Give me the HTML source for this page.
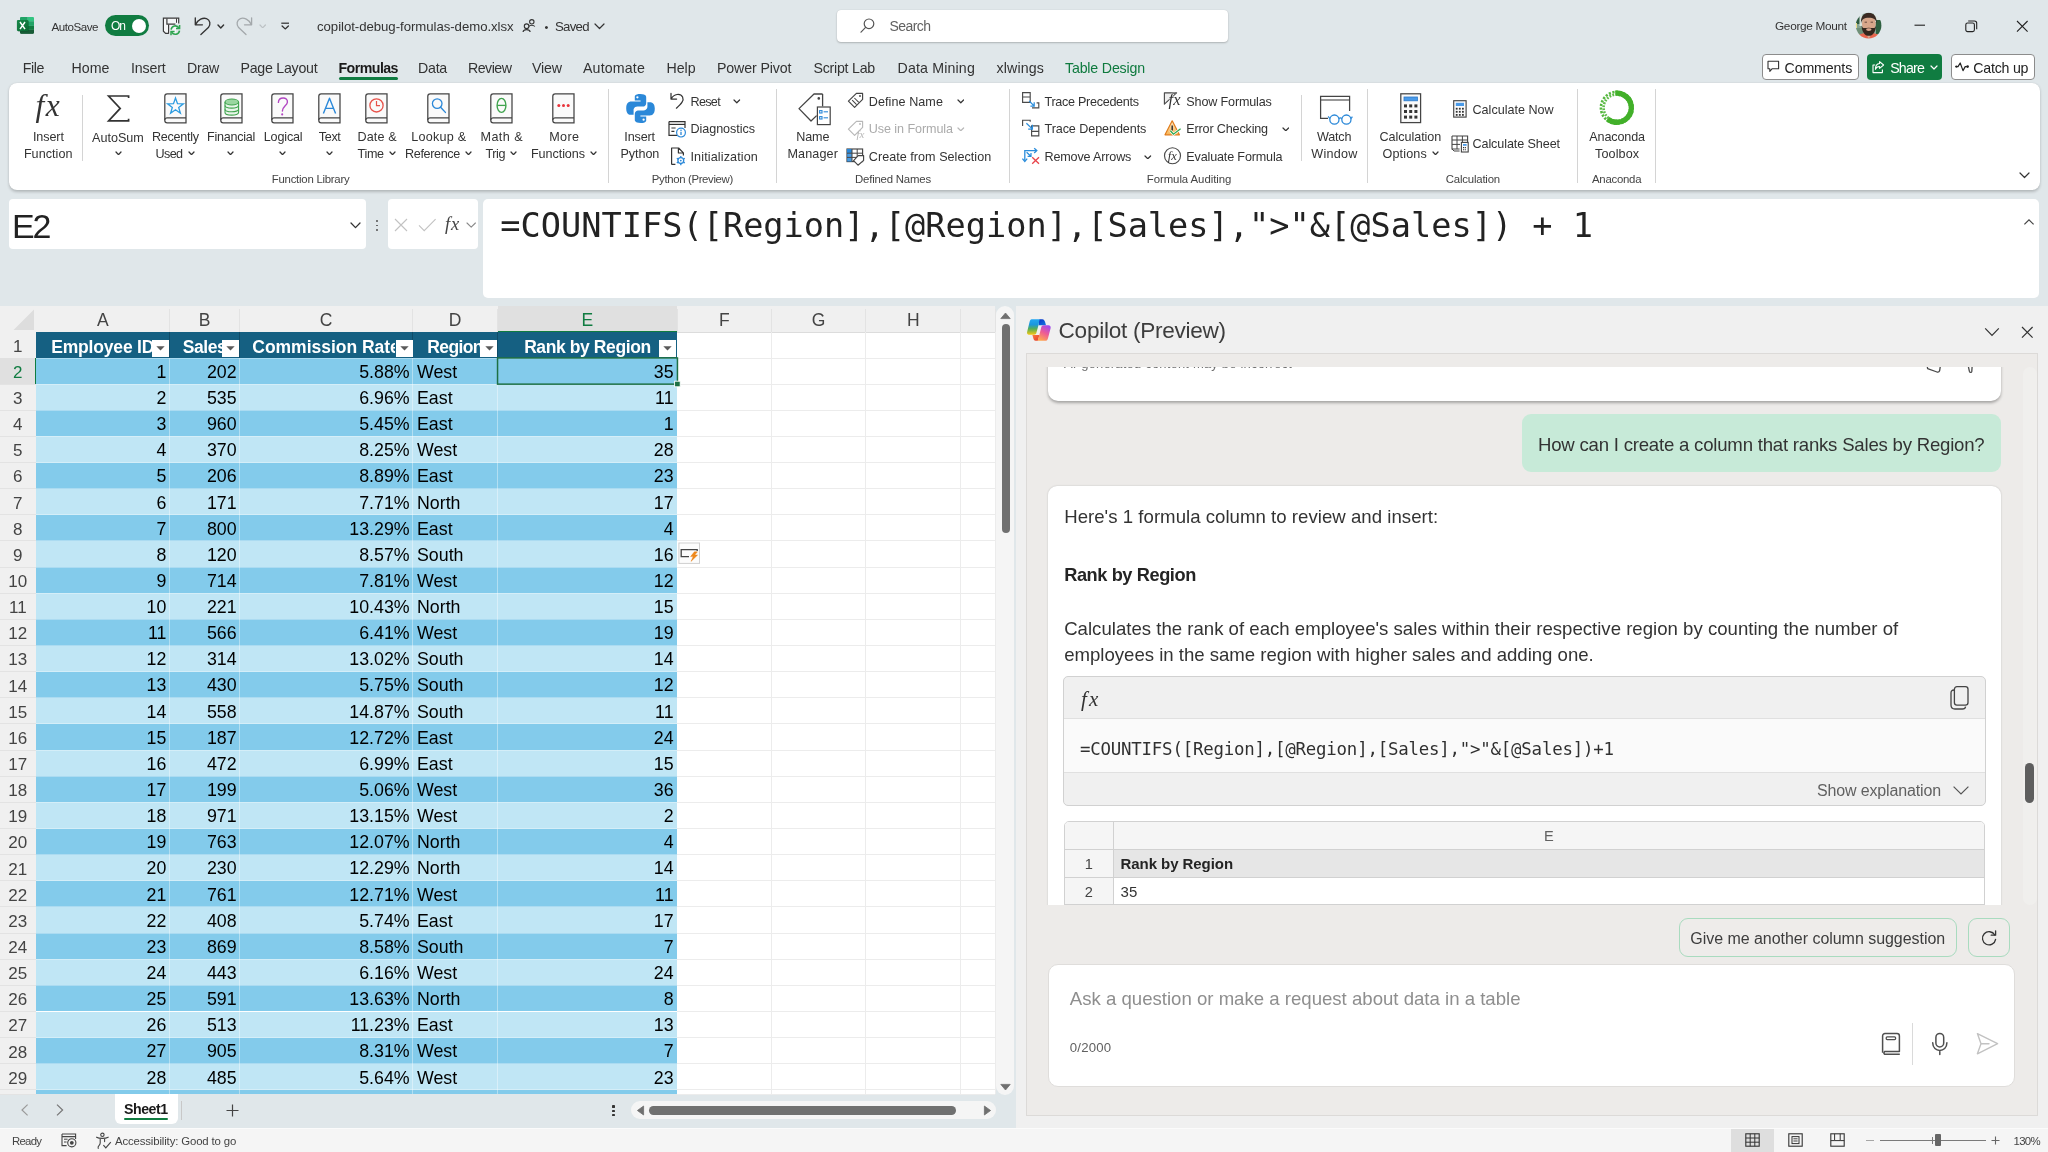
<!DOCTYPE html>
<html lang="en"><head><meta charset="utf-8"><title>copilot-debug-formulas-demo.xlsx - Excel</title>
<style>
html,body{margin:0;padding:0;}
body{width:2048px;height:1152px;overflow:hidden;background:#E0E7EA;font-family:"Liberation Sans",sans-serif;position:relative;}
#app{position:absolute;left:0;top:0;width:2048px;height:1152px;overflow:hidden;will-change:transform;}
.b{position:absolute;display:block;}
.t{position:absolute;display:block;white-space:pre;line-height:1;}
</style></head><body><div id="app">
<svg class="b" style="left:16px;top:16px;" width="19" height="19" viewBox="16 16 19 19"><defs><clipPath id="xc"><rect x="20" y="16.9" width="14" height="17" rx="1.1"/></clipPath>
<linearGradient id="xg" x1="0" y1="0" x2="1" y2="1"><stop offset="0" stop-color="#18884A"/><stop offset="1" stop-color="#0B6A33"/></linearGradient></defs>
<g clip-path="url(#xc)"><rect x="20" y="16.9" width="7.8" height="4.3" fill="#21A366"/><rect x="27.8" y="16.9" width="6.2" height="4.3" fill="#33C481"/>
<rect x="20" y="21.2" width="7.8" height="4.7" fill="#107C41"/><rect x="27.8" y="21.2" width="6.2" height="4.7" fill="#21A366"/>
<rect x="20" y="25.9" width="14" height="4" fill="#107C41"/><rect x="20" y="29.9" width="14" height="4" fill="#185C37"/></g>
<rect x="17.6" y="20.5" width="11.2" height="11.2" rx="1.1" fill="#0A4F28" opacity=".45"/>
<rect x="16.9" y="20" width="11.4" height="11.1" rx="1.1" fill="url(#xg)"/>
<path d="M20 22 L25 29.1 M25 22 L20 29.1" stroke="#fff" stroke-width="1.5" fill="none"/></svg>
<span class="t" style="left:51.50px;top:21.00px;font-size:11.6px;color:#333;letter-spacing:-0.475px;">AutoSave</span>
<div class="b" style="left:104.7px;top:14.8px;width:44.5px;height:21.5px;background:#107C41;border-radius:11px;"></div>
<span class="t" style="left:111.00px;top:20.00px;font-size:12px;color:#fff;letter-spacing:-1.004px;">On</span>
<div class="b" style="left:131.5px;top:18.5px;width:14.6px;height:14.6px;background:#fff;border-radius:50%;"></div>
<svg class="b" style="left:161px;top:16px;" width="22" height="21" viewBox="161 16 22 21"><path d="M163.4 18.1 H178.8 V24 H176 V33.4 H165.6 L163.4 31.2 Z" fill="#F4F6F7" stroke="none"/>
<path d="M178.7 23.6 V18.1 H163.4 V31.2 L165.6 33.4 H168.8" fill="none" stroke="#3B3B3B" stroke-width="1.2"/>
<path d="M166.9 18.4 V24.1 H175.4" fill="none" stroke="#3B3B3B" stroke-width="1.2"/>
<path d="M176.5 18.4 V22.8" fill="none" stroke="#3B3B3B" stroke-width="1"/>
<path d="M168.6 33.4 V24.4" fill="none" stroke="#3B3B3B" stroke-width="1.2"/>
<path d="M171.1 29.6 A4.2 4.2 0 0 1 178.9 28" fill="none" stroke="#2EA44F" stroke-width="1.6"/><path d="M179.6 25 V28.6 H176" fill="none" stroke="#2EA44F" stroke-width="1.5"/>
<path d="M179.5 30.6 A4.2 4.2 0 0 1 171.7 32.2" fill="none" stroke="#2EA44F" stroke-width="1.6"/><path d="M171 35.2 V31.6 H174.6" fill="none" stroke="#2EA44F" stroke-width="1.5"/></svg>
<svg class="b" style="left:193px;top:15px;" width="22" height="22" viewBox="193 15 22 22"><path d="M195.3 17.8 V24.8 H202.4 M195.8 24.3 C198 19.6 203 17.3 206.5 18.6 C210.2 20 211 24.2 208.4 27.6 L200.9 34.5" fill="none" stroke="#333" stroke-width="1.35" stroke-linecap="round" stroke-linejoin="round"/></svg>
<svg class="b" style="left:217.1px;top:23.5px;" width="7.6" height="5" viewBox="0 0 7.6 5"><path d="M1 1 L3.8 4 L6.6 1" fill="none" stroke="#333" stroke-width="1.4" stroke-linecap="round" stroke-linejoin="round"/></svg>
<svg class="b" style="left:234px;top:15px;" width="22" height="22" viewBox="234 15 22 22"><path d="M251.6 17.8 V24.8 H244.5 M251.1 24.3 C249 19.6 244 17.3 240.4 18.6 C236.8 20 236 24.2 238.6 27.6 L246 34.5" fill="none" stroke="#A3A8AB" stroke-width="1.3" stroke-linecap="round" stroke-linejoin="round"/></svg>
<svg class="b" style="left:258.8px;top:23.6px;" width="7.4" height="4.8" viewBox="0 0 7.4 4.8"><path d="M1 1 L3.7 3.8 L6.4 1" fill="none" stroke="#BCC1C4" stroke-width="1.2" stroke-linecap="round" stroke-linejoin="round"/></svg>
<svg class="b" style="left:279px;top:21px;" width="12" height="10" viewBox="279 21 12 10"><path d="M281.3 23.2 H289" stroke="#333" stroke-width="1.25" fill="none"/><path d="M282.1 26 L285.2 28.9 L288.4 26" stroke="#333" stroke-width="1.3" fill="none" stroke-linejoin="round" stroke-linecap="round"/></svg>
<span class="t" style="left:317.00px;top:20.00px;font-size:13.2px;color:#333;letter-spacing:-0.040px;">copilot-debug-formulas-demo.xlsx</span>
<svg class="b" style="left:522px;top:18px;" width="15" height="15" viewBox="0 0 15 15"><circle cx="9.8" cy="3.8" r="2.2" fill="none" stroke="#333" stroke-width="1.1"/>
<path d="M6.8 8.5 C8 6.8 11.6 6.8 12.8 8.5" fill="none" stroke="#333" stroke-width="1.1"/>
<circle cx="4.6" cy="8.2" r="2.3" fill="none" stroke="#333" stroke-width="1.1"/>
<path d="M1 14 C1.6 10.8 7.6 10.8 8.2 14" fill="none" stroke="#333" stroke-width="1.1"/></svg>
<span class="t" style="left:544.50px;top:22.00px;font-size:11px;color:#333;">•</span>
<span class="t" style="left:555.00px;top:20.00px;font-size:13.2px;color:#333;letter-spacing:-0.726px;">Saved</span>
<svg class="b" style="left:593.7px;top:23.25px;" width="11" height="6.5" viewBox="0 0 11 6.5"><path d="M1 1 L5.5 5.5 L10 1" fill="none" stroke="#333" stroke-width="1.2" stroke-linecap="round" stroke-linejoin="round"/></svg>
<div class="b" style="left:837px;top:10px;width:391px;height:32px;background:#fff;border-radius:4px;box-shadow:0 1px 2px rgba(0,0,0,.22),0 0 1px rgba(0,0,0,.18);"></div>
<svg class="b" style="left:859px;top:17px;" width="17" height="17" viewBox="0 0 17 17"><circle cx="10" cy="6.8" r="4.8" fill="none" stroke="#555" stroke-width="1.2"/><path d="M6.6 10.4 L2 15.2" stroke="#555" stroke-width="1.2" stroke-linecap="round"/></svg>
<span class="t" style="left:889.40px;top:19.00px;font-size:14px;color:#616161;letter-spacing:-0.543px;">Search</span>
<span class="t" style="left:1775.00px;top:21.00px;font-size:11.8px;color:#333;letter-spacing:-0.303px;">George Mount</span>
<svg class="b" style="left:1854px;top:11px;" width="30" height="30" viewBox="1854 11 30 30"><defs><clipPath id="av"><circle cx="1868.6" cy="25.6" r="12.8"/></clipPath>
<filter id="avb" x="-10%" y="-10%" width="120%" height="120%"><feGaussianBlur stdDeviation="0.55"/></filter></defs>
<g clip-path="url(#av)"><g filter="url(#avb)"><rect x="1853" y="10" width="32" height="32" fill="#86A392"/>
<rect x="1853" y="10" width="9" height="14" fill="#2E5A40"/><rect x="1859.5" y="12" width="3" height="14" fill="#D6E2DC"/>
<rect x="1874" y="10" width="12" height="12" fill="#DCE6E2"/><rect x="1876" y="20" width="10" height="14" fill="#2F6040"/>
<rect x="1853" y="23" width="4" height="5" fill="#E8DC8C"/><rect x="1853" y="28" width="10" height="8" fill="#6F9078"/>
<path d="M1854 42 C1856 34 1862 32.5 1868.8 33.5 C1875.6 32.5 1881 34 1883 42 Z" fill="#E8664E"/>
<path d="M1865.4 33 L1868.8 38.5 L1872.2 33 Z" fill="#D9A88C"/>
<ellipse cx="1868.8" cy="23.6" rx="6.9" ry="8.8" fill="#D8A68A"/>
<path d="M1861 23.4 C1859.6 9.2 1878 9.2 1876.6 23.4 C1875.8 19 1873.6 17.7 1868.8 17.7 C1864 17.7 1861.8 19 1861 23.4 Z" fill="#3A2B24"/>
<path d="M1861.6 25.4 C1861.8 31.6 1864.6 35.8 1868.8 35.8 C1873 35.8 1875.8 31.6 1876 25.4 C1875 29 1873.4 28 1868.8 27.8 C1864.2 28 1862.6 29 1861.6 25.4 Z" fill="#35261F"/>
<ellipse cx="1868.8" cy="29.6" rx="2.7" ry="1.3" fill="#D9A48C"/>
<path d="M1864.6 22.2 H1867 M1870.6 22.2 H1873" stroke="#5A4034" stroke-width="0.9"/></g></g></svg>
<svg class="b" style="left:1914px;top:24px;" width="12" height="3" viewBox="0 0 12 3"><path d="M0.5 1.2 H11" stroke="#222" stroke-width="1.1"/></svg>
<svg class="b" style="left:1965px;top:19.5px;" width="13" height="13" viewBox="0 0 13 13"><rect x="0.8" y="3" width="8.6" height="8.6" rx="1.8" fill="none" stroke="#222" stroke-width="1.1"/><path d="M3.2 1 H9.4 A2.3 2.3 0 0 1 11.7 3.3 V9.2" fill="none" stroke="#222" stroke-width="1.1"/></svg>
<svg class="b" style="left:2016px;top:19.5px;" width="13" height="13" viewBox="0 0 13 13"><path d="M1 1 L11.6 11.6 M11.6 1 L1 11.6" stroke="#222" stroke-width="1.1"/></svg>
<span class="t" style="left:22.80px;top:61.00px;font-size:14.2px;color:#333;letter-spacing:-0.420px;">File</span>
<span class="t" style="left:71.50px;top:61.00px;font-size:14.2px;color:#333;letter-spacing:0.030px;">Home</span>
<span class="t" style="left:131.00px;top:61.00px;font-size:14.2px;color:#333;letter-spacing:-0.169px;">Insert</span>
<span class="t" style="left:187.00px;top:61.00px;font-size:14.2px;color:#333;letter-spacing:-0.284px;">Draw</span>
<span class="t" style="left:240.50px;top:61.00px;font-size:14.2px;color:#333;letter-spacing:-0.249px;">Page Layout</span>
<span class="t" style="left:418.00px;top:61.00px;font-size:14.2px;color:#333;letter-spacing:-0.249px;">Data</span>
<span class="t" style="left:468.00px;top:61.00px;font-size:14.2px;color:#333;letter-spacing:-0.510px;">Review</span>
<span class="t" style="left:532.00px;top:61.00px;font-size:14.2px;color:#333;letter-spacing:-0.131px;">View</span>
<span class="t" style="left:583.00px;top:61.00px;font-size:14.2px;color:#333;letter-spacing:0.152px;">Automate</span>
<span class="t" style="left:666.50px;top:61.00px;font-size:14.2px;color:#333;letter-spacing:-0.051px;">Help</span>
<span class="t" style="left:717.00px;top:61.00px;font-size:14.2px;color:#333;letter-spacing:-0.115px;">Power Pivot</span>
<span class="t" style="left:813.50px;top:61.00px;font-size:14.2px;color:#333;letter-spacing:-0.244px;">Script Lab</span>
<span class="t" style="left:897.50px;top:61.00px;font-size:14.2px;color:#333;letter-spacing:0.157px;">Data Mining</span>
<span class="t" style="left:996.50px;top:61.00px;font-size:14.2px;color:#333;letter-spacing:0.134px;">xlwings</span>
<span class="t" style="left:338.50px;top:61.00px;font-size:14.2px;color:#1a1a1a;font-weight:bold;font-family:'Liberation Sans', sans-serif;letter-spacing:-0.552px;font-weight:600;">Formulas</span>
<div class="b" style="left:338.7px;top:76.7px;width:59.3px;height:3px;background:#107C41;border-radius:1.5px;"></div>
<span class="t" style="left:1065.00px;top:61.00px;font-size:14.2px;color:#0E7A3E;letter-spacing:-0.175px;">Table Design</span>
<div class="b" style="left:1762px;top:54.3px;width:96.5px;height:25.4px;background:#fff;border:1px solid #8C8C8C;border-radius:4px;box-sizing:border-box;"></div>
<svg class="b" style="left:1767px;top:60px;" width="13" height="13" viewBox="0 0 13 13"><path d="M1 1.2 H11.6 V8.8 H5 L2.8 11.4 V8.8 H1 Z" fill="none" stroke="#333" stroke-width="1.1" stroke-linejoin="round"/></svg>
<span class="t" style="left:1784.50px;top:61.00px;font-size:14.2px;color:#222;letter-spacing:-0.119px;">Comments</span>
<div class="b" style="left:1867px;top:54.3px;width:74.8px;height:25.4px;background:#107C41;border-radius:4px;"></div>
<svg class="b" style="left:1871px;top:60px;" width="14" height="14" viewBox="0 0 14 14"><path d="M4.2 5 H2 V12.6 H11.4 V9.6" fill="none" stroke="#fff" stroke-width="1.1" stroke-linejoin="round"/><path d="M8.6 1.6 L12.6 5 L8.6 8.4 V6.4 C6.2 6.4 5 7.4 4.4 9.4 C4.4 5.8 6 3.8 8.6 3.6 Z" fill="none" stroke="#fff" stroke-width="1.05" stroke-linejoin="round"/></svg>
<span class="t" style="left:1890.20px;top:61.00px;font-size:14.2px;color:#fff;letter-spacing:-0.818px;">Share</span>
<svg class="b" style="left:1930.0px;top:65.0px;" width="8" height="5" viewBox="0 0 8 5"><path d="M1 1 L4.0 4 L7 1" fill="none" stroke="#fff" stroke-width="1.2" stroke-linecap="round" stroke-linejoin="round"/></svg>
<div class="b" style="left:1950.6px;top:54.3px;width:84px;height:25.4px;background:#fff;border:1px solid #8C8C8C;border-radius:4px;box-sizing:border-box;"></div>
<svg class="b" style="left:1955px;top:61px;" width="15" height="12" viewBox="0 0 15 12"><path d="M0.8 5.6 H3 L5.2 2 L8 9.6 L10.2 5.6 H11.4" fill="none" stroke="#222" stroke-width="1.2" stroke-linejoin="round" stroke-linecap="round"/><circle cx="12.6" cy="5.6" r="1.3" fill="#222"/><circle cx="1.4" cy="5.6" r="1.1" fill="#222"/></svg>
<span class="t" style="left:1973.30px;top:61.00px;font-size:14.2px;color:#222;letter-spacing:-0.229px;">Catch up</span>
<div class="b" style="left:8.5px;top:83px;width:2031px;height:106.8px;background:#fff;border-radius:8px;box-shadow:0 1.5px 3px rgba(0,0,0,.2), 0 0 1px rgba(0,0,0,.12);"></div>
<span class="t" style="left:35.50px;top:90.00px;font-size:31.5px;color:#333;font-style:italic;font-family:'Liberation Serif', serif;letter-spacing:1.534px;">fx</span>
<span class="t" style="left:32.90px;top:131.00px;font-size:12.6px;color:#333;letter-spacing:-0.085px;">Insert</span>
<span class="t" style="left:23.90px;top:148.00px;font-size:12.6px;color:#333;letter-spacing:0.034px;">Function</span>
<div class="b" style="left:82.0px;top:95.2px;width:1px;height:65.39999999999999px;background:#D4D4D4;"></div>
<svg class="b" style="left:106px;top:93.5px;" width="25" height="29" viewBox="0 0 25 29"><path d="M22.6 4 V2 H2.6 L14.2 14.4 L2.6 26.8 H22.6 V24.8" fill="none" stroke="#333" stroke-width="1.7" stroke-linejoin="miter"/></svg>
<span class="t" style="left:92.00px;top:132.00px;font-size:12.6px;color:#333;">AutoSum</span>
<svg class="b" style="left:114.5px;top:150.55px;" width="7.0" height="4.7" viewBox="0 0 7.0 4.7"><path d="M1 1 L3.5 3.7 L6.0 1" fill="none" stroke="#333" stroke-width="1.25" stroke-linecap="round" stroke-linejoin="round"/></svg>
<svg class="b" style="left:163.5px;top:93.1px;" width="23" height="31" viewBox="0 0 23 31"><path d="M3.2 0.8 H22 V29.8 H3.2 A2.4 2.4 0 0 1 0.8 27.4 V3.2 A2.4 2.4 0 0 1 3.2 0.8 Z" fill="#FAFAFA" stroke="#444" stroke-width="1.25"/>
<path d="M0.8 27 A2.3 2.3 0 0 1 3.2 24.8 H22" fill="none" stroke="#444" stroke-width="1.25"/><path d="M11.5 5 L13.5 10.6 L19.4 10.8 L14.7 14.4 L16.4 20.2 L11.5 16.8 L6.6 20.2 L8.3 14.4 L3.6 10.8 L9.5 10.6 Z" fill="none" stroke="#2B9BE0" stroke-width="1.3" stroke-linejoin="miter"/></svg>
<span class="t" style="left:152.00px;top:131.00px;font-size:12.6px;color:#333;letter-spacing:-0.278px;">Recently</span>
<span class="t" style="left:155.50px;top:148.00px;font-size:12.6px;color:#333;letter-spacing:-0.604px;">Used</span>
<svg class="b" style="left:187.5px;top:150.55px;" width="7.0" height="4.7" viewBox="0 0 7.0 4.7"><path d="M1 1 L3.5 3.7 L6.0 1" fill="none" stroke="#333" stroke-width="1.25" stroke-linecap="round" stroke-linejoin="round"/></svg>
<svg class="b" style="left:219.8px;top:93.1px;" width="23" height="31" viewBox="0 0 23 31"><path d="M3.2 0.8 H22 V29.8 H3.2 A2.4 2.4 0 0 1 0.8 27.4 V3.2 A2.4 2.4 0 0 1 3.2 0.8 Z" fill="#FAFAFA" stroke="#444" stroke-width="1.25"/>
<path d="M0.8 27 A2.3 2.3 0 0 1 3.2 24.8 H22" fill="none" stroke="#444" stroke-width="1.25"/><path d="M5 9 V19.5 C5 23 18.6 23 18.6 19.5 V9" fill="#E8F5E9" stroke="#3FA34D" stroke-width="1.1"/>
<ellipse cx="11.8" cy="9" rx="6.8" ry="3" fill="#9AD6A0" stroke="#3FA34D" stroke-width="1.1"/>
<path d="M5 12.6 C5 16 18.6 16 18.6 12.6 M5 16.2 C5 19.6 18.6 19.6 18.6 16.2" fill="none" stroke="#3FA34D" stroke-width="1.1"/></svg>
<span class="t" style="left:207.00px;top:131.00px;font-size:12.6px;color:#333;letter-spacing:-0.269px;">Financial</span>
<svg class="b" style="left:227.3px;top:150.55px;" width="7.0" height="4.7" viewBox="0 0 7.0 4.7"><path d="M1 1 L3.5 3.7 L6.0 1" fill="none" stroke="#333" stroke-width="1.25" stroke-linecap="round" stroke-linejoin="round"/></svg>
<svg class="b" style="left:271px;top:93.1px;" width="23" height="31" viewBox="0 0 23 31"><path d="M3.2 0.8 H22 V29.8 H3.2 A2.4 2.4 0 0 1 0.8 27.4 V3.2 A2.4 2.4 0 0 1 3.2 0.8 Z" fill="#FAFAFA" stroke="#444" stroke-width="1.25"/>
<path d="M0.8 27 A2.3 2.3 0 0 1 3.2 24.8 H22" fill="none" stroke="#444" stroke-width="1.25"/><path d="M7.4 9.4 C7.6 3.4 17 3.6 16.4 9.2 C16 12.6 11.6 13.4 11.4 18" fill="none" stroke="#B146C2" stroke-width="1.4" stroke-linecap="round"/><circle cx="11.2" cy="21.4" r="1.05" fill="#B146C2"/></svg>
<span class="t" style="left:263.80px;top:131.00px;font-size:12.6px;color:#333;letter-spacing:-0.176px;">Logical</span>
<svg class="b" style="left:279.0px;top:150.55px;" width="7.0" height="4.7" viewBox="0 0 7.0 4.7"><path d="M1 1 L3.5 3.7 L6.0 1" fill="none" stroke="#333" stroke-width="1.25" stroke-linecap="round" stroke-linejoin="round"/></svg>
<svg class="b" style="left:317.8px;top:93.1px;" width="23" height="31" viewBox="0 0 23 31"><path d="M3.2 0.8 H22 V29.8 H3.2 A2.4 2.4 0 0 1 0.8 27.4 V3.2 A2.4 2.4 0 0 1 3.2 0.8 Z" fill="#FAFAFA" stroke="#444" stroke-width="1.25"/>
<path d="M0.8 27 A2.3 2.3 0 0 1 3.2 24.8 H22" fill="none" stroke="#444" stroke-width="1.25"/><path d="M5.4 20.6 L11.5 5.2 L17.6 20.6 M7.4 15.4 H15.6" fill="none" stroke="#2B88D8" stroke-width="1.4" stroke-linejoin="round"/></svg>
<span class="t" style="left:318.80px;top:131.00px;font-size:12.6px;color:#333;letter-spacing:-0.352px;">Text</span>
<svg class="b" style="left:326.0px;top:150.55px;" width="7.0" height="4.7" viewBox="0 0 7.0 4.7"><path d="M1 1 L3.5 3.7 L6.0 1" fill="none" stroke="#333" stroke-width="1.25" stroke-linecap="round" stroke-linejoin="round"/></svg>
<svg class="b" style="left:364.8px;top:93.1px;" width="23" height="31" viewBox="0 0 23 31"><path d="M3.2 0.8 H22 V29.8 H3.2 A2.4 2.4 0 0 1 0.8 27.4 V3.2 A2.4 2.4 0 0 1 3.2 0.8 Z" fill="#FAFAFA" stroke="#444" stroke-width="1.25"/>
<path d="M0.8 27 A2.3 2.3 0 0 1 3.2 24.8 H22" fill="none" stroke="#444" stroke-width="1.25"/><circle cx="11.5" cy="12.4" r="6.6" fill="none" stroke="#E8524A" stroke-width="1.3"/><path d="M11.5 8 V12.6 H15" fill="none" stroke="#E8524A" stroke-width="1.2"/></svg>
<span class="t" style="left:357.50px;top:131.00px;font-size:12.6px;color:#333;letter-spacing:0.130px;">Date &amp;</span>
<span class="t" style="left:357.50px;top:148.00px;font-size:12.6px;color:#333;letter-spacing:-0.308px;">Time</span>
<svg class="b" style="left:389.0px;top:150.55px;" width="7.0" height="4.7" viewBox="0 0 7.0 4.7"><path d="M1 1 L3.5 3.7 L6.0 1" fill="none" stroke="#333" stroke-width="1.25" stroke-linecap="round" stroke-linejoin="round"/></svg>
<svg class="b" style="left:426.8px;top:93.1px;" width="23" height="31" viewBox="0 0 23 31"><path d="M3.2 0.8 H22 V29.8 H3.2 A2.4 2.4 0 0 1 0.8 27.4 V3.2 A2.4 2.4 0 0 1 3.2 0.8 Z" fill="#FAFAFA" stroke="#444" stroke-width="1.25"/>
<path d="M0.8 27 A2.3 2.3 0 0 1 3.2 24.8 H22" fill="none" stroke="#444" stroke-width="1.25"/><circle cx="10.2" cy="10.6" r="4.8" fill="none" stroke="#2B88D8" stroke-width="1.3"/><path d="M13.6 14.2 L18.4 19.4" stroke="#2B88D8" stroke-width="1.4" stroke-linecap="round"/></svg>
<span class="t" style="left:411.30px;top:131.00px;font-size:12.6px;color:#333;letter-spacing:0.220px;">Lookup &amp;</span>
<span class="t" style="left:405.00px;top:148.00px;font-size:12.6px;color:#333;letter-spacing:-0.348px;">Reference</span>
<svg class="b" style="left:464.8px;top:150.55px;" width="7.0" height="4.7" viewBox="0 0 7.0 4.7"><path d="M1 1 L3.5 3.7 L6.0 1" fill="none" stroke="#333" stroke-width="1.25" stroke-linecap="round" stroke-linejoin="round"/></svg>
<svg class="b" style="left:489.8px;top:93.1px;" width="23" height="31" viewBox="0 0 23 31"><path d="M3.2 0.8 H22 V29.8 H3.2 A2.4 2.4 0 0 1 0.8 27.4 V3.2 A2.4 2.4 0 0 1 3.2 0.8 Z" fill="#FAFAFA" stroke="#444" stroke-width="1.25"/>
<path d="M0.8 27 A2.3 2.3 0 0 1 3.2 24.8 H22" fill="none" stroke="#444" stroke-width="1.25"/><ellipse cx="11.5" cy="12.4" rx="4.4" ry="7" fill="none" stroke="#3FA34D" stroke-width="1.4"/><path d="M7.2 12.4 H15.8" stroke="#3FA34D" stroke-width="1.3"/></svg>
<span class="t" style="left:480.50px;top:131.00px;font-size:12.6px;color:#333;letter-spacing:0.431px;">Math &amp;</span>
<span class="t" style="left:485.50px;top:148.00px;font-size:12.6px;color:#333;letter-spacing:-0.433px;">Trig</span>
<svg class="b" style="left:509.8px;top:150.55px;" width="7.0" height="4.7" viewBox="0 0 7.0 4.7"><path d="M1 1 L3.5 3.7 L6.0 1" fill="none" stroke="#333" stroke-width="1.25" stroke-linecap="round" stroke-linejoin="round"/></svg>
<svg class="b" style="left:552.3px;top:93.1px;" width="23" height="31" viewBox="0 0 23 31"><path d="M3.2 0.8 H22 V29.8 H3.2 A2.4 2.4 0 0 1 0.8 27.4 V3.2 A2.4 2.4 0 0 1 3.2 0.8 Z" fill="#FAFAFA" stroke="#444" stroke-width="1.25"/>
<path d="M0.8 27 A2.3 2.3 0 0 1 3.2 24.8 H22" fill="none" stroke="#444" stroke-width="1.25"/><circle cx="6.8" cy="12.4" r="1.5" fill="#E8333A"/><circle cx="11.5" cy="12.4" r="1.5" fill="#E8333A"/><circle cx="16.2" cy="12.4" r="1.5" fill="#E8333A"/></svg>
<span class="t" style="left:549.30px;top:131.00px;font-size:12.6px;color:#333;letter-spacing:0.323px;">More</span>
<span class="t" style="left:531.00px;top:148.00px;font-size:12.6px;color:#333;letter-spacing:-0.070px;">Functions</span>
<svg class="b" style="left:589.8px;top:150.55px;" width="7.0" height="4.7" viewBox="0 0 7.0 4.7"><path d="M1 1 L3.5 3.7 L6.0 1" fill="none" stroke="#333" stroke-width="1.25" stroke-linecap="round" stroke-linejoin="round"/></svg>
<span class="t" style="left:271.80px;top:174.00px;font-size:11.4px;color:#444;letter-spacing:-0.252px;">Function Library</span>
<div class="b" style="left:608.0px;top:88.8px;width:1px;height:94.2px;background:#D4D4D4;"></div>
<svg class="b" style="left:624.5px;top:92.5px;" width="31" height="31" viewBox="0 0 31 31"><path d="M15.2 1 C9.6 1 9.8 3.6 9.8 3.6 V7.4 H15.6 V8.6 H6 C6 8.6 1.2 8.2 1.2 15.2 C1.2 22 5.4 21.8 5.4 21.8 H8.6 V17.4 C8.6 17.4 8.4 13.6 12.6 13.6 H17.8 C17.8 13.6 21.2 13.6 21.2 10 V4.2 C21.2 4.2 21.8 1 15.2 1 Z" fill="#2B88D8"/>
<circle cx="12.4" cy="4.3" r="1.15" fill="#fff"/>
<path d="M15.8 30 C21.4 30 21.2 27.4 21.2 27.4 V23.6 H15.4 V22.4 H25 C25 22.4 29.8 22.8 29.8 15.8 C29.8 9 25.6 9.2 25.6 9.2 H22.4 V13.6 C22.4 13.6 22.6 17.4 18.4 17.4 H13.2 C13.2 17.4 9.8 17.4 9.8 21 V26.8 C9.8 26.8 9.2 30 15.8 30 Z" fill="#2B88D8"/>
<circle cx="18.6" cy="26.7" r="1.15" fill="#fff"/></svg>
<span class="t" style="left:624.30px;top:131.00px;font-size:12.6px;color:#333;letter-spacing:-0.135px;">Insert</span>
<span class="t" style="left:620.50px;top:148.00px;font-size:12.6px;color:#333;letter-spacing:-0.071px;">Python</span>
<svg class="b" style="left:669px;top:91px;" width="17" height="19" viewBox="0 0 17 19"><path d="M2 2.4 V8 H7.6 M2.4 7.6 C4.8 2.8 11.4 2 13.6 6 C15.4 9.6 12 13 7.4 17.2" fill="none" stroke="#333" stroke-width="1.25" stroke-linecap="round" stroke-linejoin="round"/></svg>
<span class="t" style="left:690.50px;top:96.00px;font-size:12.6px;color:#333;letter-spacing:-0.683px;">Reset</span>
<svg class="b" style="left:733.1px;top:99.1px;" width="7.6" height="4.8" viewBox="0 0 7.6 4.8"><path d="M1 1 L3.8 3.8 L6.6 1" fill="none" stroke="#333" stroke-width="1.2" stroke-linecap="round" stroke-linejoin="round"/></svg>
<svg class="b" style="left:668px;top:120px;" width="19" height="18" viewBox="0 0 19 18"><path d="M1 1.6 H17 V8" fill="none" stroke="#333" stroke-width="1.2"/><path d="M1 4.4 H17" stroke="#333" stroke-width="1.2"/><path d="M1 1.6 V15.4 H9" fill="none" stroke="#333" stroke-width="1.2"/>
<path d="M3.4 8 H7.6 M3.4 11.4 H6.4" stroke="#333" stroke-width="1.1"/>
<circle cx="13" cy="12.6" r="4.4" fill="#fff" stroke="#2B88D8" stroke-width="1.2"/><path d="M13 11.8 V15" stroke="#2B88D8" stroke-width="1.3"/><circle cx="13" cy="10.2" r="0.8" fill="#2B88D8"/></svg>
<span class="t" style="left:690.50px;top:123.00px;font-size:12.6px;color:#333;letter-spacing:-0.057px;">Diagnostics</span>
<svg class="b" style="left:670px;top:146.5px;" width="17" height="19" viewBox="0 0 17 19"><path d="M1.6 17.4 H5.4 M1.6 17.4 V1 H8.6 L13.4 5.8 V8.4 M8.4 1 V6 H13.4" fill="none" stroke="#333" stroke-width="1.2" stroke-linejoin="round"/>
<circle cx="10.8" cy="13.6" r="2.9" fill="none" stroke="#2B88D8" stroke-width="1.3"/><circle cx="10.8" cy="13.6" r="0.9" fill="#2B88D8"/>
<path d="M10.8 9 V10.6 M10.8 16.6 V18.2 M6.8 11.3 L8.2 12.1 M13.4 15.1 L14.8 15.9 M6.8 15.9 L8.2 15.1 M13.4 12.1 L14.8 11.3" stroke="#2B88D8" stroke-width="1.3"/></svg>
<span class="t" style="left:690.50px;top:151.00px;font-size:12.6px;color:#333;letter-spacing:0.119px;">Initialization</span>
<span class="t" style="left:651.80px;top:174.00px;font-size:11.4px;color:#444;letter-spacing:-0.350px;">Python (Preview)</span>
<div class="b" style="left:775.5px;top:88.8px;width:1px;height:94.2px;background:#D4D4D4;"></div>
<svg class="b" style="left:797px;top:91.5px;" width="35" height="35" viewBox="0 0 35 35"><path d="M25.6 2 H17 L2 16.6 L14 29 L19.6 23.6" fill="none" stroke="#444" stroke-width="1.3" stroke-linejoin="round"/><path d="M25.6 2 V14.4" stroke="#444" stroke-width="1.3"/>
<circle cx="21.8" cy="6.4" r="1.3" fill="#444"/>
<rect x="20.4" y="15" width="12.8" height="17.6" fill="#fff" stroke="#444" stroke-width="1.2"/>
<rect x="22.6" y="18.6" width="2.4" height="2.4" fill="none" stroke="#2B88D8" stroke-width="1.1"/><path d="M26.6 19.8 H31" stroke="#2B88D8" stroke-width="1.1"/>
<rect x="22.6" y="24.6" width="2.4" height="2.4" fill="none" stroke="#2B88D8" stroke-width="1.1"/><path d="M26.6 25.8 H31" stroke="#2B88D8" stroke-width="1.1"/></svg>
<span class="t" style="left:796.30px;top:131.00px;font-size:12.6px;color:#333;letter-spacing:-0.153px;">Name</span>
<span class="t" style="left:787.50px;top:148.00px;font-size:12.6px;color:#333;letter-spacing:0.110px;">Manager</span>
<svg class="b" style="left:846.5px;top:92px;" width="18" height="18" viewBox="0 0 18 18"><path d="M9.4 1.4 H15.6 V7.4 L7.6 15.4 L1.4 9.2 Z" fill="none" stroke="#444" stroke-width="1.15" stroke-linejoin="round"/><circle cx="13" cy="4" r="0.9" fill="#444"/><path d="M5.2 8.2 L9.6 12.6 M7.4 6 L11.8 10.4" stroke="#444" stroke-width="1.05"/></svg>
<span class="t" style="left:868.80px;top:96.00px;font-size:12.6px;color:#333;letter-spacing:0.061px;">Define Name</span>
<svg class="b" style="left:956.8px;top:99.1px;" width="7.6" height="4.8" viewBox="0 0 7.6 4.8"><path d="M1 1 L3.8 3.8 L6.6 1" fill="none" stroke="#333" stroke-width="1.2" stroke-linecap="round" stroke-linejoin="round"/></svg>
<svg class="b" style="left:846.5px;top:119.5px;" width="18" height="18" viewBox="0 0 18 18"><path d="M9.4 1.4 H15.6 V7.4 L7.6 15.4 L1.4 9.2 Z" fill="none" stroke="#B8B8B8" stroke-width="1.15" stroke-linejoin="round"/><circle cx="13" cy="4" r="0.9" fill="#B8B8B8"/></svg>
<span class="t" style="left:856.50px;top:129.00px;font-size:11px;color:#B8B8B8;font-style:italic;font-family:'Liberation Serif', serif;">fx</span>
<span class="t" style="left:868.80px;top:123.00px;font-size:12.6px;color:#ABABAB;letter-spacing:-0.088px;">Use in Formula</span>
<svg class="b" style="left:957.2px;top:126.6px;" width="7.6" height="4.8" viewBox="0 0 7.6 4.8"><path d="M1 1 L3.8 3.8 L6.6 1" fill="none" stroke="#B8B8B8" stroke-width="1.2" stroke-linecap="round" stroke-linejoin="round"/></svg>
<svg class="b" style="left:846px;top:147.5px;" width="19" height="18" viewBox="0 0 19 18"><rect x="1" y="1" width="15.6" height="12.6" fill="#fff" stroke="#444" stroke-width="1.15"/><rect x="1" y="1" width="5" height="4.2" fill="#2B88D8"/><rect x="1" y="5.2" width="5" height="4.2" fill="#2B88D8" opacity=".85"/><rect x="1" y="9.4" width="5" height="4.2" fill="#2B88D8" opacity=".85"/>
<path d="M1 5.2 H16.6 M1 9.4 H16.6 M6 1 V13.6 M11.2 1 V13.6" stroke="#444" stroke-width="1" fill="none"/>
<path d="M12.2 7.6 H17.6 V12.4 L12 17.2 L7.6 12.6 Z" fill="#fff" stroke="#444" stroke-width="1.15" stroke-linejoin="round"/></svg>
<span class="t" style="left:868.80px;top:151.00px;font-size:12.6px;color:#333;letter-spacing:0.031px;">Create from Selection</span>
<span class="t" style="left:855.00px;top:174.00px;font-size:11.4px;color:#444;letter-spacing:-0.198px;">Defined Names</span>
<div class="b" style="left:1008.5px;top:88.8px;width:1px;height:94.2px;background:#D4D4D4;"></div>
<svg class="b" style="left:1020px;top:90px;" width="22" height="20" viewBox="1020 90 22 20"><path d="M1022.6 92.6 H1030.2 V102.4 H1022.6 Z M1022.6 97 H1030.2" fill="none" stroke="#4A4A4A" stroke-width="1.15"/>
<path d="M1032 107.8 H1038.8 V102.8 H1036.6" fill="none" stroke="#4A4A4A" stroke-width="1.15"/>
<path d="M1029.2 101 L1033.8 105.6 M1034.2 102.2 V106 H1030.4" fill="none" stroke="#2B8DDB" stroke-width="1.25"/></svg>
<span class="t" style="left:1044.50px;top:96.00px;font-size:12.6px;color:#333;letter-spacing:-0.292px;">Trace Precedents</span>
<svg class="b" style="left:1020px;top:118px;" width="22" height="20" viewBox="1020 118 22 20"><path d="M1022.6 126 V120.2 H1030.2 V121.8" fill="none" stroke="#4A4A4A" stroke-width="1.15"/>
<path d="M1031.6 125.8 H1038.8 V135.8 H1031.6 Z M1031.6 131.4 H1038.8" fill="none" stroke="#4A4A4A" stroke-width="1.15"/>
<path d="M1026.4 123.2 L1032 128.6 M1032.4 124.8 V129 H1028.2" fill="none" stroke="#2B8DDB" stroke-width="1.25"/></svg>
<span class="t" style="left:1044.50px;top:123.00px;font-size:12.6px;color:#333;letter-spacing:-0.087px;">Trace Dependents</span>
<svg class="b" style="left:1020px;top:145px;" width="22" height="21" viewBox="1020 145 22 21"><path d="M1024.8 160.6 V150.6 H1036" fill="none" stroke="#2B8DDB" stroke-width="1.3"/>
<path d="M1022.4 158.6 L1024.8 161.4 L1027.2 158.6 M1034.2 148.2 L1036.8 150.6 L1034.2 153" fill="none" stroke="#2B8DDB" stroke-width="1.3"/>
<path d="M1026.6 152.2 L1030.6 156 M1031 153 V156.4 H1027.6" fill="none" stroke="#2B8DDB" stroke-width="1.2"/>
<path d="M1032.2 157.2 L1039 163.8 M1039 157.2 L1032.2 163.8" stroke="#E8434A" stroke-width="1.3"/></svg>
<span class="t" style="left:1044.50px;top:151.00px;font-size:12.6px;color:#333;letter-spacing:-0.164px;">Remove Arrows</span>
<svg class="b" style="left:1144.2px;top:154.6px;" width="7.6" height="4.8" viewBox="0 0 7.6 4.8"><path d="M1 1 L3.8 3.8 L6.6 1" fill="none" stroke="#333" stroke-width="1.2" stroke-linecap="round" stroke-linejoin="round"/></svg>
<svg class="b" style="left:1162px;top:90px;" width="22" height="22" viewBox="1162 90 22 22"><path d="M1164.4 92.8 H1176.6 L1164.4 104.2 Z" fill="#EEE" stroke="#4A4A4A" stroke-width="1.15" stroke-linejoin="round"/></svg>
<span class="t" style="left:1168.60px;top:92.00px;font-size:16.5px;color:#333;font-style:italic;font-family:'Liberation Serif', serif;text-shadow:0 0 1.5px #fff,0 0 1.5px #fff;">fx</span>
<span class="t" style="left:1186.30px;top:96.00px;font-size:12.6px;color:#333;letter-spacing:-0.156px;">Show Formulas</span>
<svg class="b" style="left:1162px;top:118px;" width="22" height="20" viewBox="1162 118 22 20"><defs><linearGradient id="eg" x1="0" y1="0" x2="0" y2="1"><stop offset="0" stop-color="#FCE9C8"/><stop offset="1" stop-color="#F6B454"/></linearGradient></defs>
<path d="M1172.2 120.8 L1165 134.8 H1179.4 Z" fill="url(#eg)" stroke="#E07B1A" stroke-width="1.2" stroke-linejoin="round"/>
<path d="M1172.2 125.4 V130.4" stroke="#333" stroke-width="1.5"/>
<path d="M1170.4 130.8 L1173.4 134.2 L1180.6 128.8" fill="none" stroke="#fff" stroke-width="2.6"/>
<path d="M1170.4 130.8 L1173.4 134.2 L1180.6 128.8" fill="none" stroke="#2FA84F" stroke-width="1.3"/></svg>
<span class="t" style="left:1186.30px;top:123.00px;font-size:12.6px;color:#333;letter-spacing:-0.166px;">Error Checking</span>
<svg class="b" style="left:1281.8px;top:126.6px;" width="7.6" height="4.8" viewBox="0 0 7.6 4.8"><path d="M1 1 L3.8 3.8 L6.6 1" fill="none" stroke="#333" stroke-width="1.2" stroke-linecap="round" stroke-linejoin="round"/></svg>
<svg class="b" style="left:1162px;top:145px;" width="22" height="21" viewBox="1162 145 22 21"><circle cx="1172.5" cy="155.7" r="8" fill="none" stroke="#4A4A4A" stroke-width="1.15"/></svg>
<span class="t" style="left:1167.80px;top:150.00px;font-size:12.5px;color:#333;font-style:italic;font-family:'Liberation Serif', serif;">fx</span>
<span class="t" style="left:1186.30px;top:151.00px;font-size:12.6px;color:#333;letter-spacing:-0.159px;">Evaluate Formula</span>
<span class="t" style="left:1146.80px;top:174.00px;font-size:11.4px;color:#444;letter-spacing:-0.065px;">Formula Auditing</span>
<div class="b" style="left:1301.3px;top:95.2px;width:1px;height:65.39999999999999px;background:#D4D4D4;"></div>
<svg class="b" style="left:1318.5px;top:95px;" width="34" height="31" viewBox="0 0 34 31"><path d="M9 23.4 H1.6 V1.4 H30.6 V16" fill="none" stroke="#444" stroke-width="1.25"/><path d="M1.6 5 H30.6" stroke="#444" stroke-width="1.1"/>
<circle cx="15.4" cy="24.6" r="4.6" fill="none" stroke="#2B88D8" stroke-width="1.3"/><circle cx="27.4" cy="24.6" r="4.6" fill="none" stroke="#2B88D8" stroke-width="1.3"/>
<path d="M20 23.6 C20.8 22.6 22 22.6 22.8 23.6 M10.8 23.6 L9.2 21.4 M32 23.6 L33.4 21.6" fill="none" stroke="#2B88D8" stroke-width="1.2"/></svg>
<span class="t" style="left:1317.00px;top:131.00px;font-size:12.6px;color:#333;letter-spacing:-0.188px;">Watch</span>
<span class="t" style="left:1311.30px;top:148.00px;font-size:12.6px;color:#333;letter-spacing:0.231px;">Window</span>
<div class="b" style="left:1367.3px;top:88.8px;width:1px;height:94.2px;background:#D4D4D4;"></div>
<svg class="b" style="left:1399.5px;top:92.5px;" width="22" height="31" viewBox="0 0 22 31"><rect x="0.8" y="0.8" width="19.8" height="28.8" fill="#FAFAFA" stroke="#444" stroke-width="1.25"/>
<rect x="4" y="4" width="13.4" height="3.8" fill="#4A9AE8" stroke="#2B78C8" stroke-width="0.8"/>
<rect x="4.0" y="11.4" width="3" height="3" fill="#333"/><rect x="4.0" y="17.0" width="3" height="3" fill="#333"/><rect x="4.0" y="22.6" width="3" height="3" fill="#333"/><rect x="9.2" y="11.4" width="3" height="3" fill="#333"/><rect x="9.2" y="17.0" width="3" height="3" fill="#333"/><rect x="9.2" y="22.6" width="3" height="3" fill="#333"/><rect x="14.4" y="11.4" width="3" height="3" fill="#333"/><rect x="14.4" y="17.0" width="3" height="3" fill="#333"/><rect x="14.4" y="22.6" width="3" height="3" fill="#333"/></svg>
<span class="t" style="left:1379.50px;top:131.00px;font-size:12.6px;color:#333;letter-spacing:-0.049px;">Calculation</span>
<span class="t" style="left:1382.50px;top:148.00px;font-size:12.6px;color:#333;letter-spacing:0.154px;">Options</span>
<svg class="b" style="left:1431.5px;top:150.55px;" width="7.0" height="4.7" viewBox="0 0 7.0 4.7"><path d="M1 1 L3.5 3.7 L6.0 1" fill="none" stroke="#333" stroke-width="1.25" stroke-linecap="round" stroke-linejoin="round"/></svg>
<svg class="b" style="left:1453px;top:100px;" width="14" height="18" viewBox="0 0 14 18"><rect x="0.7" y="0.7" width="12.4" height="16.4" fill="#FAFAFA" stroke="#444" stroke-width="1.15"/><rect x="2.8" y="2.8" width="8.2" height="3.2" fill="#4A9AE8"/><rect x="2.8" y="7.8" width="1.8" height="1.8" fill="#333"/><rect x="2.8" y="10.9" width="1.8" height="1.8" fill="#333"/><rect x="2.8" y="14.0" width="1.8" height="1.8" fill="#333"/><rect x="5.9" y="7.8" width="1.8" height="1.8" fill="#333"/><rect x="5.9" y="10.9" width="1.8" height="1.8" fill="#333"/><rect x="5.9" y="14.0" width="1.8" height="1.8" fill="#333"/><rect x="9.0" y="7.8" width="1.8" height="1.8" fill="#333"/><rect x="9.0" y="10.9" width="1.8" height="1.8" fill="#333"/><rect x="9.0" y="14.0" width="1.8" height="1.8" fill="#333"/></svg>
<span class="t" style="left:1472.50px;top:104.00px;font-size:12.6px;color:#333;">Calculate Now</span>
<svg class="b" style="left:1451px;top:135px;" width="18" height="18" viewBox="0 0 18 18"><path d="M1 1 H16.6 V7 M1 1 V14 H8.6" fill="none" stroke="#444" stroke-width="1.1"/><path d="M1 5 H16.6 M1 9.4 H9 M6 1 V14 M11.4 1 V7" stroke="#444" stroke-width="1" fill="none"/><path d="M1 14 L3 16 H8.6" stroke="#444" stroke-width="1" fill="none"/>
<rect x="10.4" y="7.4" width="6.8" height="9.6" fill="#fff" stroke="#444" stroke-width="1.1"/><rect x="12" y="9" width="3.6" height="1.8" fill="#4A9AE8"/><path d="M12 12.6 H15.6 M12 14.8 H15.6" stroke="#333" stroke-width="1.1" stroke-dasharray="1.1 0.7"/></svg>
<span class="t" style="left:1472.50px;top:138.00px;font-size:12.6px;color:#333;letter-spacing:-0.097px;">Calculate Sheet</span>
<span class="t" style="left:1445.80px;top:174.00px;font-size:11.4px;color:#444;letter-spacing:-0.200px;">Calculation</span>
<div class="b" style="left:1577.0px;top:88.8px;width:1px;height:94.2px;background:#D4D4D4;"></div>
<svg class="b" style="left:1598px;top:89px;" width="38" height="38" viewBox="1598 89 38 38"><circle cx="1616.8" cy="107.7" r="14.55" fill="none" stroke="#43B02A" stroke-width="5.3" stroke-dasharray="56.8 200" transform="rotate(264 1616.8 107.7)"/>
<circle cx="1616.8" cy="107.7" r="15.9" fill="none" stroke="#43B02A" stroke-width="2.6" stroke-dasharray="2.2 1.5" stroke-dashoffset="0.4" opacity=".9"/>
<circle cx="1616.8" cy="107.7" r="13.2" fill="none" stroke="#43B02A" stroke-width="2.6" stroke-dasharray="1.8 1.3" stroke-dashoffset="1.6" opacity=".85"/></svg>
<span class="t" style="left:1589.30px;top:131.00px;font-size:12.6px;color:#333;letter-spacing:-0.131px;">Anaconda</span>
<span class="t" style="left:1595.00px;top:148.00px;font-size:12.6px;color:#333;letter-spacing:0.124px;">Toolbox</span>
<span class="t" style="left:1592.00px;top:174.00px;font-size:11.4px;color:#444;letter-spacing:-0.256px;">Anaconda</span>
<div class="b" style="left:1655.3px;top:88.8px;width:1px;height:94.2px;background:#D4D4D4;"></div>
<svg class="b" style="left:2018.5px;top:172.25px;" width="11" height="6.5" viewBox="0 0 11 6.5"><path d="M1 1 L5.5 5.5 L10 1" fill="none" stroke="#333" stroke-width="1.2" stroke-linecap="round" stroke-linejoin="round"/></svg>
<div class="b" style="left:9px;top:198.8px;width:357px;height:50.7px;background:#fff;border-radius:4px;"></div>
<span class="t" style="left:11.90px;top:209.00px;font-size:34px;color:#222;letter-spacing:-2.044px;">E2</span>
<svg class="b" style="left:350.2px;top:222.1px;" width="11" height="6.6" viewBox="0 0 11 6.6"><path d="M1 1 L5.5 5.6 L10 1" fill="none" stroke="#333" stroke-width="1.3" stroke-linecap="round" stroke-linejoin="round"/></svg>
<div class="b" style="left:376.2px;top:220.2px;width:1.8px;height:1.8px;background:#555;border-radius:50%;"></div>
<div class="b" style="left:376.2px;top:224.6px;width:1.8px;height:1.8px;background:#555;border-radius:50%;"></div>
<div class="b" style="left:376.2px;top:229px;width:1.8px;height:1.8px;background:#555;border-radius:50%;"></div>
<div class="b" style="left:388px;top:198.8px;width:90px;height:50.7px;background:#fff;border-radius:4px;"></div>
<svg class="b" style="left:394px;top:218px;" width="14" height="14" viewBox="0 0 14 14"><path d="M1 1 L13 13 M13 1 L1 13" stroke="#C2C2C2" stroke-width="1.1"/></svg>
<svg class="b" style="left:417.5px;top:218px;" width="19" height="14" viewBox="0 0 19 14"><path d="M1 7.4 L6.2 12.6 L17.6 1.2" fill="none" stroke="#C2C2C2" stroke-width="1.1"/></svg>
<span class="t" style="left:445.00px;top:215.00px;font-size:18.5px;color:#444;font-style:italic;font-family:'Liberation Serif', serif;letter-spacing:0.825px;">fx</span>
<svg class="b" style="left:465.6px;top:222.3px;" width="10.4" height="6.2" viewBox="0 0 10.4 6.2"><path d="M1 1 L5.2 5.2 L9.4 1" fill="none" stroke="#8A8A8A" stroke-width="1.1" stroke-linecap="round" stroke-linejoin="round"/></svg>
<div class="b" style="left:483.2px;top:198.8px;width:1555.6px;height:98.9px;background:#fff;border-radius:5px;"></div>
<span class="t" style="left:500.30px;top:209.00px;font-size:33.6px;color:#222;font-family:'DejaVu Sans Mono', 'Liberation Mono', monospace;letter-spacing:0.021px;">=COUNTIFS([Region],[@Region],[Sales],&quot;&gt;&quot;&amp;[@Sales]) + 1</span>
<svg class="b" style="left:2023px;top:218px;" width="12" height="8" viewBox="0 0 12 8"><path d="M1.4 6.4 L6 1.8 L10.6 6.4" fill="none" stroke="#444" stroke-width="1.2"/></svg>
<div class="b" style="left:0px;top:306px;width:995px;height:788px;background:#fff;"></div>
<div class="b" style="left:0px;top:306px;width:995px;height:26px;background:#F0F0F0;"></div>
<div class="b" style="left:0px;top:332px;width:36px;height:762px;background:#F0F0F0;"></div>
<svg class="b" style="left:12px;top:308px;" width="23" height="23" viewBox="0 0 23 23"><path d="M22 1.5 V22 H1.5 Z" fill="#DDDDDD"/></svg>
<div class="b" style="left:36px;top:331.5px;width:959px;height:1px;background:#DCDCDC;"></div>
<div class="b" style="left:497.7px;top:306px;width:179.5px;height:26px;background:#E0E0E0;"></div>
<div class="b" style="left:497.7px;top:330.8px;width:179.5px;height:1.3px;background:#107C41;"></div>
<div class="b" style="left:169.0px;top:309px;width:1px;height:23px;background:#E3E3E3;"></div>
<div class="b" style="left:239.0px;top:309px;width:1px;height:23px;background:#E3E3E3;"></div>
<div class="b" style="left:412.0px;top:309px;width:1px;height:23px;background:#E3E3E3;"></div>
<div class="b" style="left:497.2px;top:309px;width:1px;height:23px;background:#E3E3E3;"></div>
<div class="b" style="left:676.7px;top:309px;width:1px;height:23px;background:#E3E3E3;"></div>
<div class="b" style="left:771.0px;top:309px;width:1px;height:23px;background:#E3E3E3;"></div>
<div class="b" style="left:865.3px;top:309px;width:1px;height:23px;background:#E3E3E3;"></div>
<div class="b" style="left:960.1px;top:309px;width:1px;height:23px;background:#E3E3E3;"></div>
<div class="b" style="left:994.5px;top:309px;width:1px;height:23px;background:#E3E3E3;"></div>
<span class="t" style="left:96.91px;top:312.00px;font-size:17.5px;color:#444;">A</span>
<span class="t" style="left:198.66px;top:312.00px;font-size:17.5px;color:#444;">B</span>
<span class="t" style="left:319.68px;top:312.00px;font-size:17.5px;color:#444;">C</span>
<span class="t" style="left:448.78px;top:312.00px;font-size:17.5px;color:#444;">D</span>
<span class="t" style="left:581.61px;top:312.00px;font-size:17.5px;color:#107C41;">E</span>
<span class="t" style="left:719.01px;top:312.00px;font-size:17.5px;color:#444;">F</span>
<span class="t" style="left:811.84px;top:312.00px;font-size:17.5px;color:#444;">G</span>
<span class="t" style="left:906.88px;top:312.00px;font-size:17.5px;color:#444;">H</span>
<div class="b" style="left:771.0px;top:332px;width:1px;height:762px;background:#ECECEC;"></div>
<div class="b" style="left:865.3px;top:332px;width:1px;height:762px;background:#ECECEC;"></div>
<div class="b" style="left:960.1px;top:332px;width:1px;height:762px;background:#ECECEC;"></div>
<div class="b" style="left:994.5px;top:332px;width:1px;height:762px;background:#ECECEC;"></div>
<div class="b" style="left:677.2px;top:357.5px;width:317.8px;height:1px;background:#ECECEC;"></div>
<div class="b" style="left:0px;top:357.5px;width:36px;height:1px;background:#E3E3E3;"></div>
<span class="t" style="left:13.07px;top:338.00px;font-size:17px;color:#444;">1</span>
<div class="b" style="left:36px;top:332.0px;width:641.2px;height:26px;background:#156082;"></div>
<div class="b" style="left:677.2px;top:383.64px;width:317.8px;height:1px;background:#ECECEC;"></div>
<div class="b" style="left:0px;top:383.64px;width:36px;height:1px;background:#E3E3E3;"></div>
<div class="b" style="left:0px;top:358.0px;width:36px;height:26.139999999999986px;background:#E0E0E0;"></div>
<div class="b" style="left:34.6px;top:358.0px;width:1.6px;height:26.139999999999986px;background:#107C41;"></div>
<span class="t" style="left:13.07px;top:364.00px;font-size:17px;color:#107C41;">2</span>
<div class="b" style="left:36px;top:358.0px;width:641.2px;height:26.139999999999986px;background:#83CBEB;"></div>
<div class="b" style="left:36px;top:357.5px;width:641.2px;height:1px;background:rgba(255,255,255,.32);"></div>
<div class="b" style="left:677.2px;top:409.78px;width:317.8px;height:1px;background:#ECECEC;"></div>
<div class="b" style="left:0px;top:409.78px;width:36px;height:1px;background:#E3E3E3;"></div>
<span class="t" style="left:13.07px;top:390.00px;font-size:17px;color:#444;">3</span>
<div class="b" style="left:36px;top:384.14px;width:641.2px;height:26.139999999999986px;background:#C0E6F5;"></div>
<div class="b" style="left:36px;top:383.64px;width:641.2px;height:1px;background:rgba(255,255,255,.32);"></div>
<div class="b" style="left:677.2px;top:435.92px;width:317.8px;height:1px;background:#ECECEC;"></div>
<div class="b" style="left:0px;top:435.92px;width:36px;height:1px;background:#E3E3E3;"></div>
<span class="t" style="left:13.07px;top:416.00px;font-size:17px;color:#444;">4</span>
<div class="b" style="left:36px;top:410.28px;width:641.2px;height:26.140000000000043px;background:#83CBEB;"></div>
<div class="b" style="left:36px;top:409.78px;width:641.2px;height:1px;background:rgba(255,255,255,.32);"></div>
<div class="b" style="left:677.2px;top:462.06px;width:317.8px;height:1px;background:#ECECEC;"></div>
<div class="b" style="left:0px;top:462.06px;width:36px;height:1px;background:#E3E3E3;"></div>
<span class="t" style="left:13.07px;top:442.00px;font-size:17px;color:#444;">5</span>
<div class="b" style="left:36px;top:436.42px;width:641.2px;height:26.139999999999986px;background:#C0E6F5;"></div>
<div class="b" style="left:36px;top:435.92px;width:641.2px;height:1px;background:rgba(255,255,255,.32);"></div>
<div class="b" style="left:677.2px;top:488.2px;width:317.8px;height:1px;background:#ECECEC;"></div>
<div class="b" style="left:0px;top:488.2px;width:36px;height:1px;background:#E3E3E3;"></div>
<span class="t" style="left:13.07px;top:468.00px;font-size:17px;color:#444;">6</span>
<div class="b" style="left:36px;top:462.56px;width:641.2px;height:26.139999999999986px;background:#83CBEB;"></div>
<div class="b" style="left:36px;top:462.06px;width:641.2px;height:1px;background:rgba(255,255,255,.32);"></div>
<div class="b" style="left:677.2px;top:514.34px;width:317.8px;height:1px;background:#ECECEC;"></div>
<div class="b" style="left:0px;top:514.34px;width:36px;height:1px;background:#E3E3E3;"></div>
<span class="t" style="left:13.07px;top:495.00px;font-size:17px;color:#444;">7</span>
<div class="b" style="left:36px;top:488.7px;width:641.2px;height:26.140000000000043px;background:#C0E6F5;"></div>
<div class="b" style="left:36px;top:488.2px;width:641.2px;height:1px;background:rgba(255,255,255,.32);"></div>
<div class="b" style="left:677.2px;top:540.48px;width:317.8px;height:1px;background:#ECECEC;"></div>
<div class="b" style="left:0px;top:540.48px;width:36px;height:1px;background:#E3E3E3;"></div>
<span class="t" style="left:13.07px;top:521.00px;font-size:17px;color:#444;">8</span>
<div class="b" style="left:36px;top:514.84px;width:641.2px;height:26.139999999999986px;background:#83CBEB;"></div>
<div class="b" style="left:36px;top:514.34px;width:641.2px;height:1px;background:rgba(255,255,255,.32);"></div>
<div class="b" style="left:677.2px;top:566.62px;width:317.8px;height:1px;background:#ECECEC;"></div>
<div class="b" style="left:0px;top:566.62px;width:36px;height:1px;background:#E3E3E3;"></div>
<span class="t" style="left:13.07px;top:547.00px;font-size:17px;color:#444;">9</span>
<div class="b" style="left:36px;top:540.98px;width:641.2px;height:26.139999999999986px;background:#C0E6F5;"></div>
<div class="b" style="left:36px;top:540.48px;width:641.2px;height:1px;background:rgba(255,255,255,.32);"></div>
<div class="b" style="left:677.2px;top:592.76px;width:317.8px;height:1px;background:#ECECEC;"></div>
<div class="b" style="left:0px;top:592.76px;width:36px;height:1px;background:#E3E3E3;"></div>
<span class="t" style="left:8.35px;top:573.00px;font-size:17px;color:#444;">10</span>
<div class="b" style="left:36px;top:567.12px;width:641.2px;height:26.139999999999986px;background:#83CBEB;"></div>
<div class="b" style="left:36px;top:566.62px;width:641.2px;height:1px;background:rgba(255,255,255,.32);"></div>
<div class="b" style="left:677.2px;top:618.9px;width:317.8px;height:1px;background:#ECECEC;"></div>
<div class="b" style="left:0px;top:618.9px;width:36px;height:1px;background:#E3E3E3;"></div>
<span class="t" style="left:8.98px;top:599.00px;font-size:17px;color:#444;">11</span>
<div class="b" style="left:36px;top:593.26px;width:641.2px;height:26.139999999999986px;background:#C0E6F5;"></div>
<div class="b" style="left:36px;top:592.76px;width:641.2px;height:1px;background:rgba(255,255,255,.32);"></div>
<div class="b" style="left:677.2px;top:645.04px;width:317.8px;height:1px;background:#ECECEC;"></div>
<div class="b" style="left:0px;top:645.04px;width:36px;height:1px;background:#E3E3E3;"></div>
<span class="t" style="left:8.35px;top:625.00px;font-size:17px;color:#444;">12</span>
<div class="b" style="left:36px;top:619.4px;width:641.2px;height:26.139999999999986px;background:#83CBEB;"></div>
<div class="b" style="left:36px;top:618.9px;width:641.2px;height:1px;background:rgba(255,255,255,.32);"></div>
<div class="b" style="left:677.2px;top:671.1800000000001px;width:317.8px;height:1px;background:#ECECEC;"></div>
<div class="b" style="left:0px;top:671.1800000000001px;width:36px;height:1px;background:#E3E3E3;"></div>
<span class="t" style="left:8.35px;top:651.00px;font-size:17px;color:#444;">13</span>
<div class="b" style="left:36px;top:645.54px;width:641.2px;height:26.1400000000001px;background:#C0E6F5;"></div>
<div class="b" style="left:36px;top:645.04px;width:641.2px;height:1px;background:rgba(255,255,255,.32);"></div>
<div class="b" style="left:677.2px;top:697.3199999999999px;width:317.8px;height:1px;background:#ECECEC;"></div>
<div class="b" style="left:0px;top:697.3199999999999px;width:36px;height:1px;background:#E3E3E3;"></div>
<span class="t" style="left:8.35px;top:678.00px;font-size:17px;color:#444;">14</span>
<div class="b" style="left:36px;top:671.6800000000001px;width:641.2px;height:26.139999999999873px;background:#83CBEB;"></div>
<div class="b" style="left:36px;top:671.1800000000001px;width:641.2px;height:1px;background:rgba(255,255,255,.32);"></div>
<div class="b" style="left:677.2px;top:723.46px;width:317.8px;height:1px;background:#ECECEC;"></div>
<div class="b" style="left:0px;top:723.46px;width:36px;height:1px;background:#E3E3E3;"></div>
<span class="t" style="left:8.35px;top:704.00px;font-size:17px;color:#444;">15</span>
<div class="b" style="left:36px;top:697.8199999999999px;width:641.2px;height:26.1400000000001px;background:#C0E6F5;"></div>
<div class="b" style="left:36px;top:697.3199999999999px;width:641.2px;height:1px;background:rgba(255,255,255,.32);"></div>
<div class="b" style="left:677.2px;top:749.6px;width:317.8px;height:1px;background:#ECECEC;"></div>
<div class="b" style="left:0px;top:749.6px;width:36px;height:1px;background:#E3E3E3;"></div>
<span class="t" style="left:8.35px;top:730.00px;font-size:17px;color:#444;">16</span>
<div class="b" style="left:36px;top:723.96px;width:641.2px;height:26.139999999999986px;background:#83CBEB;"></div>
<div class="b" style="left:36px;top:723.46px;width:641.2px;height:1px;background:rgba(255,255,255,.32);"></div>
<div class="b" style="left:677.2px;top:775.74px;width:317.8px;height:1px;background:#ECECEC;"></div>
<div class="b" style="left:0px;top:775.74px;width:36px;height:1px;background:#E3E3E3;"></div>
<span class="t" style="left:8.35px;top:756.00px;font-size:17px;color:#444;">17</span>
<div class="b" style="left:36px;top:750.1px;width:641.2px;height:26.139999999999986px;background:#C0E6F5;"></div>
<div class="b" style="left:36px;top:749.6px;width:641.2px;height:1px;background:rgba(255,255,255,.32);"></div>
<div class="b" style="left:677.2px;top:801.88px;width:317.8px;height:1px;background:#ECECEC;"></div>
<div class="b" style="left:0px;top:801.88px;width:36px;height:1px;background:#E3E3E3;"></div>
<span class="t" style="left:8.35px;top:782.00px;font-size:17px;color:#444;">18</span>
<div class="b" style="left:36px;top:776.24px;width:641.2px;height:26.139999999999986px;background:#83CBEB;"></div>
<div class="b" style="left:36px;top:775.74px;width:641.2px;height:1px;background:rgba(255,255,255,.32);"></div>
<div class="b" style="left:677.2px;top:828.02px;width:317.8px;height:1px;background:#ECECEC;"></div>
<div class="b" style="left:0px;top:828.02px;width:36px;height:1px;background:#E3E3E3;"></div>
<span class="t" style="left:8.35px;top:808.00px;font-size:17px;color:#444;">19</span>
<div class="b" style="left:36px;top:802.38px;width:641.2px;height:26.139999999999986px;background:#C0E6F5;"></div>
<div class="b" style="left:36px;top:801.88px;width:641.2px;height:1px;background:rgba(255,255,255,.32);"></div>
<div class="b" style="left:677.2px;top:854.1600000000001px;width:317.8px;height:1px;background:#ECECEC;"></div>
<div class="b" style="left:0px;top:854.1600000000001px;width:36px;height:1px;background:#E3E3E3;"></div>
<span class="t" style="left:8.35px;top:834.00px;font-size:17px;color:#444;">20</span>
<div class="b" style="left:36px;top:828.52px;width:641.2px;height:26.1400000000001px;background:#83CBEB;"></div>
<div class="b" style="left:36px;top:828.02px;width:641.2px;height:1px;background:rgba(255,255,255,.32);"></div>
<div class="b" style="left:677.2px;top:880.3px;width:317.8px;height:1px;background:#ECECEC;"></div>
<div class="b" style="left:0px;top:880.3px;width:36px;height:1px;background:#E3E3E3;"></div>
<span class="t" style="left:8.35px;top:861.00px;font-size:17px;color:#444;">21</span>
<div class="b" style="left:36px;top:854.6600000000001px;width:641.2px;height:26.139999999999873px;background:#C0E6F5;"></div>
<div class="b" style="left:36px;top:854.1600000000001px;width:641.2px;height:1px;background:rgba(255,255,255,.32);"></div>
<div class="b" style="left:677.2px;top:906.44px;width:317.8px;height:1px;background:#ECECEC;"></div>
<div class="b" style="left:0px;top:906.44px;width:36px;height:1px;background:#E3E3E3;"></div>
<span class="t" style="left:8.35px;top:887.00px;font-size:17px;color:#444;">22</span>
<div class="b" style="left:36px;top:880.8px;width:641.2px;height:26.1400000000001px;background:#83CBEB;"></div>
<div class="b" style="left:36px;top:880.3px;width:641.2px;height:1px;background:rgba(255,255,255,.32);"></div>
<div class="b" style="left:677.2px;top:932.58px;width:317.8px;height:1px;background:#ECECEC;"></div>
<div class="b" style="left:0px;top:932.58px;width:36px;height:1px;background:#E3E3E3;"></div>
<span class="t" style="left:8.35px;top:913.00px;font-size:17px;color:#444;">23</span>
<div class="b" style="left:36px;top:906.94px;width:641.2px;height:26.139999999999986px;background:#C0E6F5;"></div>
<div class="b" style="left:36px;top:906.44px;width:641.2px;height:1px;background:rgba(255,255,255,.32);"></div>
<div class="b" style="left:677.2px;top:958.72px;width:317.8px;height:1px;background:#ECECEC;"></div>
<div class="b" style="left:0px;top:958.72px;width:36px;height:1px;background:#E3E3E3;"></div>
<span class="t" style="left:8.35px;top:939.00px;font-size:17px;color:#444;">24</span>
<div class="b" style="left:36px;top:933.08px;width:641.2px;height:26.139999999999986px;background:#83CBEB;"></div>
<div class="b" style="left:36px;top:932.58px;width:641.2px;height:1px;background:rgba(255,255,255,.32);"></div>
<div class="b" style="left:677.2px;top:984.86px;width:317.8px;height:1px;background:#ECECEC;"></div>
<div class="b" style="left:0px;top:984.86px;width:36px;height:1px;background:#E3E3E3;"></div>
<span class="t" style="left:8.35px;top:965.00px;font-size:17px;color:#444;">25</span>
<div class="b" style="left:36px;top:959.22px;width:641.2px;height:26.139999999999986px;background:#C0E6F5;"></div>
<div class="b" style="left:36px;top:958.72px;width:641.2px;height:1px;background:rgba(255,255,255,.32);"></div>
<div class="b" style="left:677.2px;top:1011.0px;width:317.8px;height:1px;background:#ECECEC;"></div>
<div class="b" style="left:0px;top:1011.0px;width:36px;height:1px;background:#E3E3E3;"></div>
<span class="t" style="left:8.35px;top:991.00px;font-size:17px;color:#444;">26</span>
<div class="b" style="left:36px;top:985.36px;width:641.2px;height:26.139999999999986px;background:#83CBEB;"></div>
<div class="b" style="left:36px;top:984.86px;width:641.2px;height:1px;background:rgba(255,255,255,.32);"></div>
<div class="b" style="left:677.2px;top:1037.1399999999999px;width:317.8px;height:1px;background:#ECECEC;"></div>
<div class="b" style="left:0px;top:1037.1399999999999px;width:36px;height:1px;background:#E3E3E3;"></div>
<span class="t" style="left:8.35px;top:1017.00px;font-size:17px;color:#444;">27</span>
<div class="b" style="left:36px;top:1011.5px;width:641.2px;height:26.139999999999873px;background:#C0E6F5;"></div>
<div class="b" style="left:36px;top:1011.0px;width:641.2px;height:1px;background:rgba(255,255,255,.32);"></div>
<div class="b" style="left:677.2px;top:1063.28px;width:317.8px;height:1px;background:#ECECEC;"></div>
<div class="b" style="left:0px;top:1063.28px;width:36px;height:1px;background:#E3E3E3;"></div>
<span class="t" style="left:8.35px;top:1044.00px;font-size:17px;color:#444;">28</span>
<div class="b" style="left:36px;top:1037.6399999999999px;width:641.2px;height:26.1400000000001px;background:#83CBEB;"></div>
<div class="b" style="left:36px;top:1037.1399999999999px;width:641.2px;height:1px;background:rgba(255,255,255,.32);"></div>
<div class="b" style="left:677.2px;top:1089.42px;width:317.8px;height:1px;background:#ECECEC;"></div>
<div class="b" style="left:0px;top:1089.42px;width:36px;height:1px;background:#E3E3E3;"></div>
<span class="t" style="left:8.35px;top:1070.00px;font-size:17px;color:#444;">29</span>
<div class="b" style="left:36px;top:1063.78px;width:641.2px;height:26.1400000000001px;background:#C0E6F5;"></div>
<div class="b" style="left:36px;top:1063.28px;width:641.2px;height:1px;background:rgba(255,255,255,.32);"></div>
<div class="b" style="left:677.2px;top:1093.5px;width:317.8px;height:1px;background:#ECECEC;"></div>
<div class="b" style="left:0px;top:1093.5px;width:36px;height:1px;background:#E3E3E3;"></div>
<div class="b" style="left:36px;top:1089.92px;width:641.2px;height:4.079999999999927px;background:#83CBEB;"></div>
<div class="b" style="left:36px;top:1089.42px;width:641.2px;height:1px;background:rgba(255,255,255,.32);"></div>
<div class="b" style="left:168.9px;top:358px;width:1.2px;height:736px;background:rgba(255,255,255,.38);"></div>
<div class="b" style="left:168.9px;top:332px;width:1.2px;height:26px;background:#0F4C68;"></div>
<div class="b" style="left:238.9px;top:358px;width:1.2px;height:736px;background:rgba(255,255,255,.38);"></div>
<div class="b" style="left:238.9px;top:332px;width:1.2px;height:26px;background:#0F4C68;"></div>
<div class="b" style="left:411.9px;top:358px;width:1.2px;height:736px;background:rgba(255,255,255,.38);"></div>
<div class="b" style="left:411.9px;top:332px;width:1.2px;height:26px;background:#0F4C68;"></div>
<div class="b" style="left:497.09999999999997px;top:358px;width:1.2px;height:736px;background:rgba(255,255,255,.38);"></div>
<div class="b" style="left:497.09999999999997px;top:332px;width:1.2px;height:26px;background:#0F4C68;"></div>
<div class="b" style="left:36px;top:332px;width:116.0px;height:26px;overflow:hidden;"><span class="t" style="left:15.25px;top:7px;font-size:17.5px;font-weight:bold;color:#fff;letter-spacing:-0.185px;">Employee ID</span></div>
<div class="b" style="left:151.9px;top:339.8px;width:17.2px;height:17.6px;background:#fff;"></div>
<svg class="b" style="left:156.2px;top:346.4px;" width="9" height="5" viewBox="0 0 9 5"><path d="M0.3 0.3 H8.7 L4.5 4.6 Z" fill="#5A5A5A"/></svg>
<div class="b" style="left:169.5px;top:332px;width:52.5px;height:26px;overflow:hidden;"><span class="t" style="left:13.20px;top:7px;font-size:17.5px;font-weight:bold;color:#fff;letter-spacing:-0.427px;">Sales</span></div>
<div class="b" style="left:221.9px;top:339.8px;width:17.2px;height:17.6px;background:#fff;"></div>
<svg class="b" style="left:226.2px;top:346.4px;" width="9" height="5" viewBox="0 0 9 5"><path d="M0.3 0.3 H8.7 L4.5 4.6 Z" fill="#5A5A5A"/></svg>
<div class="b" style="left:239.5px;top:332px;width:155.5px;height:26px;overflow:hidden;"><span class="t" style="left:12.80px;top:7px;font-size:17.5px;font-weight:bold;color:#fff;letter-spacing:-0.027px;">Commission Rate</span></div>
<div class="b" style="left:395.5px;top:339.8px;width:17.2px;height:17.6px;background:#fff;"></div>
<svg class="b" style="left:399.8px;top:346.4px;" width="9" height="5" viewBox="0 0 9 5"><path d="M0.3 0.3 H8.7 L4.5 4.6 Z" fill="#5A5A5A"/></svg>
<div class="b" style="left:412.5px;top:332px;width:67.7px;height:26px;overflow:hidden;"><span class="t" style="left:14.85px;top:7px;font-size:17.5px;font-weight:bold;color:#fff;letter-spacing:-0.634px;">Region</span></div>
<div class="b" style="left:480.3px;top:339.8px;width:17.2px;height:17.6px;background:#fff;"></div>
<svg class="b" style="left:484.6px;top:346.4px;" width="9" height="5" viewBox="0 0 9 5"><path d="M0.3 0.3 H8.7 L4.5 4.6 Z" fill="#5A5A5A"/></svg>
<div class="b" style="left:497.7px;top:332px;width:162.0px;height:26px;overflow:hidden;"><span class="t" style="left:26.45px;top:7px;font-size:17.5px;font-weight:bold;color:#fff;letter-spacing:-0.403px;">Rank by Region</span></div>
<div class="b" style="left:658.8px;top:339.8px;width:17.2px;height:17.6px;background:#fff;"></div>
<svg class="b" style="left:663.1px;top:346.4px;" width="9" height="5" viewBox="0 0 9 5"><path d="M0.3 0.3 H8.7 L4.5 4.6 Z" fill="#5A5A5A"/></svg>
<span class="t" style="left:156.50px;top:364.00px;font-size:17.8px;color:#000;">1</span>
<span class="t" style="left:206.90px;top:364.00px;font-size:17.8px;color:#000;">202</span>
<span class="t" style="left:359.23px;top:364.00px;font-size:17.8px;color:#000;">5.88%</span>
<span class="t" style="left:417.00px;top:364.00px;font-size:17.8px;color:#000;">West</span>
<span class="t" style="left:653.80px;top:364.00px;font-size:17.8px;color:#000;">35</span>
<span class="t" style="left:156.50px;top:390.00px;font-size:17.8px;color:#000;">2</span>
<span class="t" style="left:206.90px;top:390.00px;font-size:17.8px;color:#000;">535</span>
<span class="t" style="left:359.23px;top:390.00px;font-size:17.8px;color:#000;">6.96%</span>
<span class="t" style="left:417.00px;top:390.00px;font-size:17.8px;color:#000;">East</span>
<span class="t" style="left:655.12px;top:390.00px;font-size:17.8px;color:#000;">11</span>
<span class="t" style="left:156.50px;top:416.00px;font-size:17.8px;color:#000;">3</span>
<span class="t" style="left:206.90px;top:416.00px;font-size:17.8px;color:#000;">960</span>
<span class="t" style="left:359.23px;top:416.00px;font-size:17.8px;color:#000;">5.45%</span>
<span class="t" style="left:417.00px;top:416.00px;font-size:17.8px;color:#000;">East</span>
<span class="t" style="left:663.70px;top:416.00px;font-size:17.8px;color:#000;">1</span>
<span class="t" style="left:156.50px;top:442.00px;font-size:17.8px;color:#000;">4</span>
<span class="t" style="left:206.90px;top:442.00px;font-size:17.8px;color:#000;">370</span>
<span class="t" style="left:359.23px;top:442.00px;font-size:17.8px;color:#000;">8.25%</span>
<span class="t" style="left:417.00px;top:442.00px;font-size:17.8px;color:#000;">West</span>
<span class="t" style="left:653.80px;top:442.00px;font-size:17.8px;color:#000;">28</span>
<span class="t" style="left:156.50px;top:468.00px;font-size:17.8px;color:#000;">5</span>
<span class="t" style="left:206.90px;top:468.00px;font-size:17.8px;color:#000;">206</span>
<span class="t" style="left:359.23px;top:468.00px;font-size:17.8px;color:#000;">8.89%</span>
<span class="t" style="left:417.00px;top:468.00px;font-size:17.8px;color:#000;">East</span>
<span class="t" style="left:653.80px;top:468.00px;font-size:17.8px;color:#000;">23</span>
<span class="t" style="left:156.50px;top:495.00px;font-size:17.8px;color:#000;">6</span>
<span class="t" style="left:206.90px;top:495.00px;font-size:17.8px;color:#000;">171</span>
<span class="t" style="left:359.23px;top:495.00px;font-size:17.8px;color:#000;">7.71%</span>
<span class="t" style="left:417.00px;top:495.00px;font-size:17.8px;color:#000;">North</span>
<span class="t" style="left:653.80px;top:495.00px;font-size:17.8px;color:#000;">17</span>
<span class="t" style="left:156.50px;top:521.00px;font-size:17.8px;color:#000;">7</span>
<span class="t" style="left:206.90px;top:521.00px;font-size:17.8px;color:#000;">800</span>
<span class="t" style="left:349.33px;top:521.00px;font-size:17.8px;color:#000;">13.29%</span>
<span class="t" style="left:417.00px;top:521.00px;font-size:17.8px;color:#000;">East</span>
<span class="t" style="left:663.70px;top:521.00px;font-size:17.8px;color:#000;">4</span>
<span class="t" style="left:156.50px;top:547.00px;font-size:17.8px;color:#000;">8</span>
<span class="t" style="left:206.90px;top:547.00px;font-size:17.8px;color:#000;">120</span>
<span class="t" style="left:359.23px;top:547.00px;font-size:17.8px;color:#000;">8.57%</span>
<span class="t" style="left:417.00px;top:547.00px;font-size:17.8px;color:#000;">South</span>
<span class="t" style="left:653.80px;top:547.00px;font-size:17.8px;color:#000;">16</span>
<span class="t" style="left:156.50px;top:573.00px;font-size:17.8px;color:#000;">9</span>
<span class="t" style="left:206.90px;top:573.00px;font-size:17.8px;color:#000;">714</span>
<span class="t" style="left:359.23px;top:573.00px;font-size:17.8px;color:#000;">7.81%</span>
<span class="t" style="left:417.00px;top:573.00px;font-size:17.8px;color:#000;">West</span>
<span class="t" style="left:653.80px;top:573.00px;font-size:17.8px;color:#000;">12</span>
<span class="t" style="left:146.60px;top:599.00px;font-size:17.8px;color:#000;">10</span>
<span class="t" style="left:206.90px;top:599.00px;font-size:17.8px;color:#000;">221</span>
<span class="t" style="left:349.33px;top:599.00px;font-size:17.8px;color:#000;">10.43%</span>
<span class="t" style="left:417.00px;top:599.00px;font-size:17.8px;color:#000;">North</span>
<span class="t" style="left:653.80px;top:599.00px;font-size:17.8px;color:#000;">15</span>
<span class="t" style="left:147.92px;top:625.00px;font-size:17.8px;color:#000;">11</span>
<span class="t" style="left:206.90px;top:625.00px;font-size:17.8px;color:#000;">566</span>
<span class="t" style="left:359.23px;top:625.00px;font-size:17.8px;color:#000;">6.41%</span>
<span class="t" style="left:417.00px;top:625.00px;font-size:17.8px;color:#000;">West</span>
<span class="t" style="left:653.80px;top:625.00px;font-size:17.8px;color:#000;">19</span>
<span class="t" style="left:146.60px;top:651.00px;font-size:17.8px;color:#000;">12</span>
<span class="t" style="left:206.90px;top:651.00px;font-size:17.8px;color:#000;">314</span>
<span class="t" style="left:349.33px;top:651.00px;font-size:17.8px;color:#000;">13.02%</span>
<span class="t" style="left:417.00px;top:651.00px;font-size:17.8px;color:#000;">South</span>
<span class="t" style="left:653.80px;top:651.00px;font-size:17.8px;color:#000;">14</span>
<span class="t" style="left:146.60px;top:677.00px;font-size:17.8px;color:#000;">13</span>
<span class="t" style="left:206.90px;top:677.00px;font-size:17.8px;color:#000;">430</span>
<span class="t" style="left:359.23px;top:677.00px;font-size:17.8px;color:#000;">5.75%</span>
<span class="t" style="left:417.00px;top:677.00px;font-size:17.8px;color:#000;">South</span>
<span class="t" style="left:653.80px;top:677.00px;font-size:17.8px;color:#000;">12</span>
<span class="t" style="left:146.60px;top:704.00px;font-size:17.8px;color:#000;">14</span>
<span class="t" style="left:206.90px;top:704.00px;font-size:17.8px;color:#000;">558</span>
<span class="t" style="left:349.33px;top:704.00px;font-size:17.8px;color:#000;">14.87%</span>
<span class="t" style="left:417.00px;top:704.00px;font-size:17.8px;color:#000;">South</span>
<span class="t" style="left:655.12px;top:704.00px;font-size:17.8px;color:#000;">11</span>
<span class="t" style="left:146.60px;top:730.00px;font-size:17.8px;color:#000;">15</span>
<span class="t" style="left:206.90px;top:730.00px;font-size:17.8px;color:#000;">187</span>
<span class="t" style="left:349.33px;top:730.00px;font-size:17.8px;color:#000;">12.72%</span>
<span class="t" style="left:417.00px;top:730.00px;font-size:17.8px;color:#000;">East</span>
<span class="t" style="left:653.80px;top:730.00px;font-size:17.8px;color:#000;">24</span>
<span class="t" style="left:146.60px;top:756.00px;font-size:17.8px;color:#000;">16</span>
<span class="t" style="left:206.90px;top:756.00px;font-size:17.8px;color:#000;">472</span>
<span class="t" style="left:359.23px;top:756.00px;font-size:17.8px;color:#000;">6.99%</span>
<span class="t" style="left:417.00px;top:756.00px;font-size:17.8px;color:#000;">East</span>
<span class="t" style="left:653.80px;top:756.00px;font-size:17.8px;color:#000;">15</span>
<span class="t" style="left:146.60px;top:782.00px;font-size:17.8px;color:#000;">17</span>
<span class="t" style="left:206.90px;top:782.00px;font-size:17.8px;color:#000;">199</span>
<span class="t" style="left:359.23px;top:782.00px;font-size:17.8px;color:#000;">5.06%</span>
<span class="t" style="left:417.00px;top:782.00px;font-size:17.8px;color:#000;">West</span>
<span class="t" style="left:653.80px;top:782.00px;font-size:17.8px;color:#000;">36</span>
<span class="t" style="left:146.60px;top:808.00px;font-size:17.8px;color:#000;">18</span>
<span class="t" style="left:206.90px;top:808.00px;font-size:17.8px;color:#000;">971</span>
<span class="t" style="left:349.33px;top:808.00px;font-size:17.8px;color:#000;">13.15%</span>
<span class="t" style="left:417.00px;top:808.00px;font-size:17.8px;color:#000;">West</span>
<span class="t" style="left:663.70px;top:808.00px;font-size:17.8px;color:#000;">2</span>
<span class="t" style="left:146.60px;top:834.00px;font-size:17.8px;color:#000;">19</span>
<span class="t" style="left:206.90px;top:834.00px;font-size:17.8px;color:#000;">763</span>
<span class="t" style="left:349.33px;top:834.00px;font-size:17.8px;color:#000;">12.07%</span>
<span class="t" style="left:417.00px;top:834.00px;font-size:17.8px;color:#000;">North</span>
<span class="t" style="left:663.70px;top:834.00px;font-size:17.8px;color:#000;">4</span>
<span class="t" style="left:146.60px;top:860.00px;font-size:17.8px;color:#000;">20</span>
<span class="t" style="left:206.90px;top:860.00px;font-size:17.8px;color:#000;">230</span>
<span class="t" style="left:349.33px;top:860.00px;font-size:17.8px;color:#000;">12.29%</span>
<span class="t" style="left:417.00px;top:860.00px;font-size:17.8px;color:#000;">North</span>
<span class="t" style="left:653.80px;top:860.00px;font-size:17.8px;color:#000;">14</span>
<span class="t" style="left:146.60px;top:887.00px;font-size:17.8px;color:#000;">21</span>
<span class="t" style="left:206.90px;top:887.00px;font-size:17.8px;color:#000;">761</span>
<span class="t" style="left:349.33px;top:887.00px;font-size:17.8px;color:#000;">12.71%</span>
<span class="t" style="left:417.00px;top:887.00px;font-size:17.8px;color:#000;">West</span>
<span class="t" style="left:655.12px;top:887.00px;font-size:17.8px;color:#000;">11</span>
<span class="t" style="left:146.60px;top:913.00px;font-size:17.8px;color:#000;">22</span>
<span class="t" style="left:206.90px;top:913.00px;font-size:17.8px;color:#000;">408</span>
<span class="t" style="left:359.23px;top:913.00px;font-size:17.8px;color:#000;">5.74%</span>
<span class="t" style="left:417.00px;top:913.00px;font-size:17.8px;color:#000;">East</span>
<span class="t" style="left:653.80px;top:913.00px;font-size:17.8px;color:#000;">17</span>
<span class="t" style="left:146.60px;top:939.00px;font-size:17.8px;color:#000;">23</span>
<span class="t" style="left:206.90px;top:939.00px;font-size:17.8px;color:#000;">869</span>
<span class="t" style="left:359.23px;top:939.00px;font-size:17.8px;color:#000;">8.58%</span>
<span class="t" style="left:417.00px;top:939.00px;font-size:17.8px;color:#000;">South</span>
<span class="t" style="left:663.70px;top:939.00px;font-size:17.8px;color:#000;">7</span>
<span class="t" style="left:146.60px;top:965.00px;font-size:17.8px;color:#000;">24</span>
<span class="t" style="left:206.90px;top:965.00px;font-size:17.8px;color:#000;">443</span>
<span class="t" style="left:359.23px;top:965.00px;font-size:17.8px;color:#000;">6.16%</span>
<span class="t" style="left:417.00px;top:965.00px;font-size:17.8px;color:#000;">West</span>
<span class="t" style="left:653.80px;top:965.00px;font-size:17.8px;color:#000;">24</span>
<span class="t" style="left:146.60px;top:991.00px;font-size:17.8px;color:#000;">25</span>
<span class="t" style="left:206.90px;top:991.00px;font-size:17.8px;color:#000;">591</span>
<span class="t" style="left:349.33px;top:991.00px;font-size:17.8px;color:#000;">13.63%</span>
<span class="t" style="left:417.00px;top:991.00px;font-size:17.8px;color:#000;">North</span>
<span class="t" style="left:663.70px;top:991.00px;font-size:17.8px;color:#000;">8</span>
<span class="t" style="left:146.60px;top:1017.00px;font-size:17.8px;color:#000;">26</span>
<span class="t" style="left:206.90px;top:1017.00px;font-size:17.8px;color:#000;">513</span>
<span class="t" style="left:350.65px;top:1017.00px;font-size:17.8px;color:#000;">11.23%</span>
<span class="t" style="left:417.00px;top:1017.00px;font-size:17.8px;color:#000;">East</span>
<span class="t" style="left:653.80px;top:1017.00px;font-size:17.8px;color:#000;">13</span>
<span class="t" style="left:146.60px;top:1043.00px;font-size:17.8px;color:#000;">27</span>
<span class="t" style="left:206.90px;top:1043.00px;font-size:17.8px;color:#000;">905</span>
<span class="t" style="left:359.23px;top:1043.00px;font-size:17.8px;color:#000;">8.31%</span>
<span class="t" style="left:417.00px;top:1043.00px;font-size:17.8px;color:#000;">West</span>
<span class="t" style="left:663.70px;top:1043.00px;font-size:17.8px;color:#000;">7</span>
<span class="t" style="left:146.60px;top:1070.00px;font-size:17.8px;color:#000;">28</span>
<span class="t" style="left:206.90px;top:1070.00px;font-size:17.8px;color:#000;">485</span>
<span class="t" style="left:359.23px;top:1070.00px;font-size:17.8px;color:#000;">5.64%</span>
<span class="t" style="left:417.00px;top:1070.00px;font-size:17.8px;color:#000;">West</span>
<span class="t" style="left:653.80px;top:1070.00px;font-size:17.8px;color:#000;">23</span>
<svg class="b" style="left:495px;top:355px;" width="188" height="34" viewBox="495 355 188 34"><rect x="497.55" y="357.95" width="179.9" height="26.2" fill="none" stroke="#1D7044" stroke-width="1.5"/><rect x="674.6" y="381.2" width="5.6" height="5.6" fill="#1D7044" stroke="#fff" stroke-width="0.9"/></svg>
<svg class="b" style="left:678px;top:542px;" width="23" height="23" viewBox="678 542 23 23"><rect x="678.9" y="543" width="20.6" height="20.4" fill="#FCFCFC" stroke="#CFCFCF" stroke-width="1"/><path d="M689 556.6 H681.2 V549.6 H697.2 V551" fill="none" stroke="#444" stroke-width="1.3"/><path d="M694.4 551.8 L690.6 556.6 H693.2 L691 561.4 L697.6 555 H694.8 L697.4 551.8 Z" fill="#F08A1C" stroke="#E57A0C" stroke-width="0.4"/></svg>
<div class="b" style="left:996.2px;top:306px;width:18.2px;height:789.2px;background:#F5F5F5;border-radius:9px;"></div>
<svg class="b" style="left:1000px;top:311.5px;" width="11" height="8" viewBox="0 0 11 8"><path d="M5.5 1 L10.2 6.6 H0.8 Z" fill="#707070" stroke="#707070" stroke-width="0.8" stroke-linejoin="round"/></svg>
<svg class="b" style="left:1000px;top:1082.5px;" width="11" height="8" viewBox="0 0 11 8"><path d="M5.5 7 L10.2 1.4 H0.8 Z" fill="#707070" stroke="#707070" stroke-width="0.8" stroke-linejoin="round"/></svg>
<div class="b" style="left:1001.6px;top:324px;width:8.6px;height:209px;background:#707070;border-radius:4.3px;"></div>
<div class="b" style="left:1016px;top:306px;width:1032px;height:822px;background:#F0F0F0;"></div>
<svg class="b" style="left:1024px;top:316px;" width="30" height="28" viewBox="1024 316 30 28"><defs>
<linearGradient id="cg1" x1="0" y1="0" x2="0" y2="1"><stop offset="0" stop-color="#22A7F2"/><stop offset=".35" stop-color="#1C97DC"/><stop offset=".62" stop-color="#55AE56"/><stop offset="1" stop-color="#F5C814"/></linearGradient>
<linearGradient id="cg2" x1="0.75" y1="0" x2="0.3" y2="1"><stop offset="0" stop-color="#A04AF0"/><stop offset=".5" stop-color="#EE5C94"/><stop offset="1" stop-color="#FFA850"/></linearGradient>
<linearGradient id="cg3" x1="0" y1="0" x2="1" y2="1"><stop offset="0" stop-color="#0A32C8"/><stop offset="1" stop-color="#1478E0"/></linearGradient>
<linearGradient id="cg4" x1="0" y1="0" x2="1" y2="1"><stop offset="0" stop-color="#FF7A3C"/><stop offset="1" stop-color="#E03C30"/></linearGradient></defs>
<path d="M1039.2 319.2 H1042.4 C1044 319.3 1044.6 320.6 1045 321.8 L1046 325.2 H1038.6 Z" fill="url(#cg3)"/>
<path d="M1032.4 335 H1039.6 L1037.8 340.8 H1035.4 C1034.2 340.7 1033.7 339.6 1033.4 338.6 Z" fill="url(#cg4)"/>
<path d="M1031.6 319.2 H1039.6 C1039.2 320.6 1038.9 323.6 1038.4 325.4 L1036.4 332.8 C1036 334.2 1035.4 334.7 1034.2 334.7 H1029 C1027.4 334.7 1026.7 333.4 1027.1 332 L1029.6 321.8 C1030 320.2 1030.6 319.3 1031.6 319.2 Z" fill="url(#cg1)"/>
<path d="M1046 340.8 H1037.6 C1038.2 339.2 1038.9 336.6 1039.4 334.8 L1041.2 327.6 C1041.6 326 1042.2 325.2 1043.6 325.2 H1048.4 C1050.2 325.2 1051 326.6 1050.6 328.2 L1048.2 337.6 C1047.8 339.4 1047.2 340.7 1046 340.8 Z" fill="url(#cg2)"/></svg>
<span class="t" style="left:1058.60px;top:320.00px;font-size:22.6px;color:#3d3d3d;letter-spacing:-0.286px;">Copilot (Preview)</span>
<svg class="b" style="left:1984px;top:327px;" width="16" height="10" viewBox="0 0 16 10"><path d="M1.2 1.4 L8 8.4 L14.8 1.4" fill="none" stroke="#333" stroke-width="1.2"/></svg>
<svg class="b" style="left:2020.5px;top:326px;" width="13" height="13" viewBox="0 0 13 13"><path d="M1 1 L11.6 11.6 M11.6 1 L1 11.6" stroke="#333" stroke-width="1.2"/></svg>
<div class="b" style="left:1025.8px;top:352.8px;width:1011.8px;height:763px;background:#EDEBE9;border:1px solid #DCDAD8;box-sizing:border-box;"></div>
<div class="b" style="left:2022.5px;top:367px;width:14px;height:538px;background:#F0EFED;border-radius:7px;"></div>
<div class="b" style="left:2025px;top:763.2px;width:9px;height:39.6px;background:#5E5E5E;border-radius:4.5px;"></div>
<div class="b" style="left:1040px;top:367px;width:975px;height:538px;overflow:hidden;">
<div class="b" style="left:8px;top:-47px;width:953.2px;height:81px;background:#fff;border-radius:10px;box-shadow:0 1.5px 3px rgba(0,0,0,.3);"></div>
<span class="t" style="left:24.00px;top:-10.00px;font-size:13px;color:#707070;letter-spacing:0.186px;">AI-generated content may be incorrect</span>
<svg class="b" style="left:880px;top:-7px" width="60" height="16" viewBox="1920 360 60 16"><path d="M1926.6 362 L1927.6 368.6 L1937 372 C1938.4 372.4 1939.2 372 1939.6 370.8 L1941 362" fill="none" stroke="#4A4A4A" stroke-width="1.3" stroke-linejoin="round"/><path d="M1967.4 362 L1969.4 371.4 C1969.8 372.8 1971.6 372.8 1971.8 371.4 L1972.4 362" fill="none" stroke="#4A4A4A" stroke-width="1.3"/></svg>
<div class="b" style="left:482px;top:47.4px;width:479px;height:58px;background:#C7EAD8;border-radius:9px;"></div>
<span class="t" style="left:498.00px;top:69.00px;font-size:18.6px;color:#333;letter-spacing:-0.215px;">How can I create a column that ranks Sales by Region?</span>
<div class="b" style="left:8px;top:119px;width:953px;height:460px;background:#fff;border-radius:9px;box-shadow:0 0 2px rgba(0,0,0,.2);"></div>
<span class="t" style="left:24.20px;top:141.00px;font-size:18.6px;color:#333;letter-spacing:0.033px;">Here's 1 formula column to review and insert:</span>
<span class="t" style="left:24.20px;top:199.00px;font-size:18.2px;color:#242424;font-weight:bold;font-family:'Liberation Sans', sans-serif;letter-spacing:-0.409px;font-weight:600;">Rank by Region</span>
<span class="t" style="left:24.20px;top:253.00px;font-size:18.6px;color:#333;letter-spacing:0.005px;">Calculates the rank of each employee's sales within their respective region by counting the number of</span>
<span class="t" style="left:24.20px;top:279.00px;font-size:18.6px;color:#333;letter-spacing:-0.012px;">employees in the same region with higher sales and adding one.</span>
<div class="b" style="left:23.2px;top:309.2px;width:922.5px;height:129.4px;background:#F0F0F0;border:1px solid #D1D1D1;border-radius:5px;box-sizing:border-box;overflow:hidden;"></div>
<div class="b" style="left:24.2px;top:351.2px;width:920.5px;height:54.4px;background:#FAFAFA;border-top:1px solid #E0E0E0;border-bottom:1px solid #E0E0E0;box-sizing:border-box;"></div>
<span class="t" style="left:41.00px;top:322.00px;font-size:21px;color:#333;font-style:italic;font-family:'Liberation Serif', serif;letter-spacing:2.172px;">fx</span>
<svg class="b" style="left:908.5px;top:318px" width="22" height="26" viewBox="0 0 22 26"><rect x="5.4" y="1.6" width="13.6" height="18.6" rx="2.6" fill="none" stroke="#444" stroke-width="1.3"/><path d="M5.2 5 C2.6 5 2 6.4 2 8 V20 C2 22.6 3.6 24 6 24 H13.4 C15.2 24 16.4 23 16.6 21.6" fill="none" stroke="#444" stroke-width="1.3"/></svg>
<span class="t" style="left:40.00px;top:374.00px;font-size:17.4px;color:#303030;font-family:'DejaVu Sans Mono', 'Liberation Mono', monospace;letter-spacing:-0.206px;">=COUNTIFS([Region],[@Region],[Sales],&quot;&gt;&quot;&amp;[@Sales])+1</span>
<span class="t" style="left:777.00px;top:416.00px;font-size:16px;color:#616161;letter-spacing:-0.145px;">Show explanation</span>
<svg class="b" style="left:911.5px;top:417.5px" width="18" height="11" viewBox="0 0 18 11"><path d="M1.6 1.6 L9 9 L16.4 1.6" fill="none" stroke="#555" stroke-width="1.2"/></svg>
<div class="b" style="left:24.2px;top:454.2px;width:920.5px;height:120px;background:#fff;border:1px solid #D1D1D1;border-radius:5px;box-sizing:border-box;"></div>
<div class="b" style="left:25.2px;top:455.2px;width:918.5px;height:27.4px;background:#F5F5F5;border-radius:4px 4px 0 0;"></div>
<div class="b" style="left:25.2px;top:482.6px;width:48.7px;height:60px;background:#F5F5F5;"></div>
<div class="b" style="left:73.9px;top:482.6px;width:869.8px;height:27.4px;background:#E6E6E6;"></div>
<div class="b" style="left:73.4px;top:455.2px;width:1px;height:90px;background:#D1D1D1;"></div>
<div class="b" style="left:25.2px;top:482.1px;width:918.5px;height:1px;background:#D1D1D1;"></div>
<div class="b" style="left:25.2px;top:509.6px;width:918.5px;height:1px;background:#D1D1D1;"></div>
<div class="b" style="left:25.2px;top:537.2px;width:918.5px;height:1px;background:#D1D1D1;"></div>
<span class="t" style="left:503.93px;top:462.00px;font-size:14.6px;color:#616161;">E</span>
<span class="t" style="left:44.74px;top:490.00px;font-size:14.6px;color:#444;">1</span>
<span class="t" style="left:44.74px;top:518.00px;font-size:14.6px;color:#444;">2</span>
<span class="t" style="left:80.50px;top:489.00px;font-size:15px;color:#242424;font-weight:bold;font-family:'Liberation Sans', sans-serif;letter-spacing:-0.061px;font-weight:600;">Rank by Region</span>
<span class="t" style="left:80.50px;top:517.00px;font-size:15px;color:#333;letter-spacing:0.158px;">35</span>
</div>
<div class="b" style="left:1678.5px;top:918px;width:278.4px;height:38.8px;background:#EEECEA;border:1px solid #A9DBBF;border-radius:9px;box-sizing:border-box;"></div>
<span class="t" style="left:1690.30px;top:931.00px;font-size:16px;color:#3d3d3d;letter-spacing:-0.038px;">Give me another column suggestion</span>
<div class="b" style="left:1968.4px;top:918px;width:41.4px;height:38.8px;background:#EEECEA;border:1px solid #A9DBBF;border-radius:9px;box-sizing:border-box;"></div>
<svg class="b" style="left:1980px;top:928.5px;" width="18" height="18" viewBox="0 0 18 18"><path d="M14.8 6 A6.6 6.6 0 1 0 15.6 10.4" fill="none" stroke="#333" stroke-width="1.3" stroke-linecap="round"/><path d="M15.6 1.8 V6.2 H11.2" fill="none" stroke="#333" stroke-width="1.3" stroke-linecap="round" stroke-linejoin="round"/></svg>
<div class="b" style="left:1048.3px;top:963.6px;width:966.8px;height:123.6px;background:#fff;border:1.5px solid #DFDDDB;border-radius:10px;box-sizing:border-box;"></div>
<span class="t" style="left:1069.80px;top:990.00px;font-size:18.6px;color:#8E8E8E;">Ask a question or make a request about data in a table</span>
<span class="t" style="left:1069.80px;top:1041.00px;font-size:13.2px;color:#616161;letter-spacing:0.204px;">0/2000</span>
<svg class="b" style="left:1880px;top:1031px;" width="22" height="26" viewBox="0 0 22 26"><path d="M5 2.6 H17 A2.4 2.4 0 0 1 19.4 5 V20.4 H4.6 A2 2 0 0 0 4.6 23.2 H19.8" fill="none" stroke="#4F4F4F" stroke-width="1.5" stroke-linejoin="round"/><path d="M2.6 21.8 V5 A2.4 2.4 0 0 1 5 2.6" fill="none" stroke="#4F4F4F" stroke-width="1.5"/><rect x="6.2" y="5.9" width="9.4" height="2.7" rx="1" fill="none" stroke="#4F4F4F" stroke-width="1.3"/></svg>
<div class="b" style="left:1912px;top:1022.5px;width:1.1px;height:42.5px;background:#DADADA;"></div>
<svg class="b" style="left:1930px;top:1030.5px;" width="20" height="26" viewBox="0 0 20 26"><rect x="5.9" y="2.5" width="7.8" height="13.4" rx="3.9" fill="none" stroke="#4F4F4F" stroke-width="1.5"/><path d="M2.7 11.8 C2.7 22 16.9 22 16.9 11.8 M9.8 19.6 V23.6" fill="none" stroke="#4F4F4F" stroke-width="1.5" stroke-linecap="round"/></svg>
<svg class="b" style="left:1975px;top:1031px;" width="26" height="26" viewBox="0 0 26 26"><path d="M2.4 2.6 L22.6 12.7 L2.4 22.8 L6 12.7 Z M6 12.7 H14" fill="none" stroke="#C2C2C2" stroke-width="1.4" stroke-linejoin="round" stroke-linecap="round"/></svg>
<svg class="b" style="left:19px;top:1103px;" width="12" height="14" viewBox="0 0 12 14"><path d="M8.6 1.6 L3 7 L8.6 12.4" fill="none" stroke="#9A9A9A" stroke-width="1.2"/></svg>
<svg class="b" style="left:54px;top:1103px;" width="12" height="14" viewBox="0 0 12 14"><path d="M3 1.6 L8.6 7 L3 12.4" fill="none" stroke="#777" stroke-width="1.2"/></svg>
<div class="b" style="left:115px;top:1094px;width:62.5px;height:29.8px;background:#fff;border-radius:0 0 6px 6px;"></div>
<span class="t" style="left:124.00px;top:1102.00px;font-size:14.2px;color:#1a1a1a;font-weight:bold;font-family:'Liberation Sans', sans-serif;letter-spacing:-0.494px;font-weight:600;">Sheet1</span>
<div class="b" style="left:124px;top:1118px;width:44px;height:2.4px;background:#107C41;border-radius:1px;"></div>
<div class="b" style="left:181px;top:1101px;width:1px;height:19px;background:#C8C8C8;"></div>
<svg class="b" style="left:226px;top:1103.5px;" width="13" height="13" viewBox="0 0 13 13"><path d="M6.5 0.5 V12.5 M0.5 6.5 H12.5" stroke="#444" stroke-width="1.2"/></svg>
<div class="b" style="left:612.4px;top:1105.3999999999999px;width:2.3px;height:2.3px;background:#333;border-radius:0.4px;"></div>
<div class="b" style="left:612.4px;top:1109.6px;width:2.3px;height:2.3px;background:#333;border-radius:0.4px;"></div>
<div class="b" style="left:612.4px;top:1113.8px;width:2.3px;height:2.3px;background:#333;border-radius:0.4px;"></div>
<div class="b" style="left:631px;top:1101px;width:365.2px;height:18px;background:#F5F5F5;border-radius:9px;"></div>
<svg class="b" style="left:635.5px;top:1105px;" width="9" height="11" viewBox="0 0 9 11"><path d="M7.6 1 L1.4 5.5 L7.6 10 Z" fill="#707070" stroke="#707070" stroke-width="0.8" stroke-linejoin="round"/></svg>
<svg class="b" style="left:983px;top:1105px;" width="9" height="11" viewBox="0 0 9 11"><path d="M1.4 1 L7.6 5.5 L1.4 10 Z" fill="#707070" stroke="#707070" stroke-width="0.8" stroke-linejoin="round"/></svg>
<div class="b" style="left:649px;top:1105.9px;width:307.3px;height:8.8px;background:#707070;border-radius:4.4px;"></div>
<div class="b" style="left:0px;top:1127.6px;width:2048px;height:24.4px;background:#F5F5F5;border-top:1px solid #FBFBFB;box-sizing:border-box;"></div>
<span class="t" style="left:12.00px;top:1136.00px;font-size:11.4px;color:#444;letter-spacing:-0.731px;">Ready</span>
<svg class="b" style="left:61px;top:1132.5px;" width="17" height="15" viewBox="0 0 17 15"><path d="M1 1 H14.6 V6 M1 1 V12.6 H5.6 M1 3.6 H14.6" fill="none" stroke="#444" stroke-width="1.1"/><path d="M3 6.2 H6.6 M3 9 H5.6" stroke="#444" stroke-width="1"/><circle cx="10.8" cy="9.8" r="4.1" fill="#F3F3F3" stroke="#444" stroke-width="1.1"/><circle cx="10.8" cy="9.8" r="1.9" fill="#444"/></svg>
<svg class="b" style="left:95px;top:1131.5px;" width="18" height="18" viewBox="0 0 18 18"><circle cx="7.4" cy="2.8" r="1.7" fill="none" stroke="#444" stroke-width="1.1"/><path d="M1.6 5.2 C4 6.8 10.6 6.8 13.2 5.2 M5.2 6.4 V11 C5.2 14 2.2 13.4 3.2 16.4 M9.6 6.4 V9.6" fill="none" stroke="#444" stroke-width="1.1" stroke-linecap="round"/><path d="M8.4 13.2 L10.8 15.8 L15.8 10.2" fill="none" stroke="#444" stroke-width="1.2"/></svg>
<span class="t" style="left:115.00px;top:1136.00px;font-size:11.4px;color:#444;letter-spacing:-0.141px;">Accessibility: Good to go</span>
<div class="b" style="left:1731.4px;top:1128.6px;width:42.5px;height:23.4px;background:#DEDEDE;"></div>
<svg class="b" style="left:1745px;top:1132.5px;" width="15" height="15" viewBox="0 0 15 15"><rect x="0.8" y="0.8" width="13.4" height="12.4" fill="none" stroke="#333" stroke-width="1.1"/><path d="M0.8 5 H14.2 M0.8 9.2 H14.2 M5.2 0.8 V13.2 M9.8 0.8 V13.2" stroke="#333" stroke-width="1"/></svg>
<svg class="b" style="left:1788px;top:1132.5px;" width="15" height="15" viewBox="0 0 15 15"><rect x="0.8" y="0.8" width="13.4" height="12.4" fill="none" stroke="#333" stroke-width="1.1"/><rect x="4" y="3.6" width="7" height="7" fill="none" stroke="#333" stroke-width="1"/><path d="M5.4 5.8 H9.6 M5.4 8 H9.6" stroke="#333" stroke-width=".9"/></svg>
<svg class="b" style="left:1830px;top:1132.5px;" width="15" height="15" viewBox="0 0 15 15"><rect x="0.8" y="0.8" width="13.4" height="12.4" fill="none" stroke="#333" stroke-width="1.1"/><path d="M4.6 0.8 V7.6 H10.2 V0.8 M0.8 7.6 H4.6 M10.2 7.6 H14.2" fill="none" stroke="#333" stroke-width="1"/></svg>
<div class="b" style="left:1865.8px;top:1139.8px;width:7.8px;height:1.1px;background:#A6A6A6;"></div>
<div class="b" style="left:1880px;top:1139.8px;width:105.5px;height:1.1px;background:#7A7A7A;"></div>
<div class="b" style="left:1932.2px;top:1137px;width:1px;height:6.6px;background:#7A7A7A;"></div>
<div class="b" style="left:1935.3px;top:1134.4px;width:5.4px;height:11.6px;background:#666;border-radius:1px;"></div>
<svg class="b" style="left:1991px;top:1135.8px;" width="9" height="9" viewBox="0 0 9 9"><path d="M4.5 0.5 V8.5 M0.5 4.5 H8.5" stroke="#666" stroke-width="1.1"/></svg>
<span class="t" style="left:2013.50px;top:1136.00px;font-size:11.4px;color:#444;letter-spacing:-0.664px;">130%</span>
</div></body></html>
